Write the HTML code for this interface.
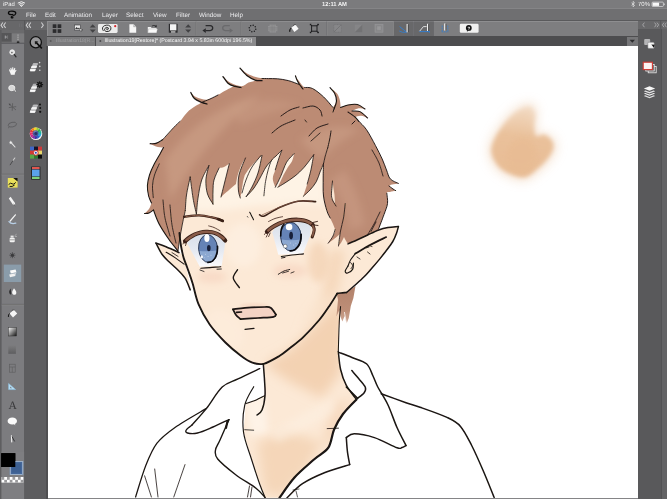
<!DOCTYPE html>
<html lang="en"><head><meta charset="utf-8"><title>CLIP STUDIO PAINT</title>
<style>
*{margin:0;padding:0;box-sizing:border-box}
html,body{width:667px;height:499px;overflow:hidden;background:#fff}
body{position:relative;text-rendering:geometricPrecision;font-family:"Liberation Sans",sans-serif;color:#e6e6e8}
.abs{position:absolute}
#status{left:0;top:0;width:667px;height:8px;background:#7b7b7d}
#status span{position:absolute;will-change:transform;top:0.9px;font-size:6.6px;line-height:8px;color:#f2f2f2;white-space:nowrap}
#menubar{left:0;top:8px;width:667px;height:12.5px;background:#6f6f71;border-top:1px solid #858587}
#menubar span{position:absolute;will-change:transform;top:2.9px;font-size:6.3px;line-height:8px;color:#ececee;white-space:nowrap}
#cmdbar{left:46.5px;top:20.5px;width:591.7px;height:15.7px;background:#7e7e80;border-top:0.8px solid #8e8e90;border-left:0.8px solid #8e8e90}
#tabbar{left:46.5px;top:36.3px;width:591.7px;height:10.1px;background:#4d4d4f}
.tab{position:absolute;will-change:transform;top:0.6px;height:9.4px;font-size:5.33px;line-height:9px;white-space:nowrap;overflow:hidden;letter-spacing:-0.02px}
#tab1{left:0.5px;width:48.3px;font-size:5.15px;background:#7a7a7c;color:#a0a0a2;padding-left:9px}
#tab2{left:49.5px;width:160.2px;background:#8a8a8c;color:#f6f6f6;padding-left:8.6px}
#tabdd{left:626.7px;top:36.6px;width:11.4px;height:9.4px;background:#767678}
#lhead{left:0;top:20.5px;width:46.5px;height:9.5px;background:#676769}
#ltools{left:0;top:30px;width:24.1px;height:469px;background:#7c7c7f}
#lsub{left:24.1px;top:30px;width:22.6px;height:469px;background:#5d5d5f}
#lborder{left:46.4px;top:46px;width:1.7px;height:453px;background:#4f4f51}
#rpanel{left:638.2px;top:20.5px;width:22.6px;height:478.5px;background:#59595b}
#rhead{left:638.2px;top:20.5px;width:28.8px;height:8.4px;background:#68686a}
#rfar{left:660.8px;top:28.9px;width:6.2px;height:470.1px;background:#636365;border-left:0.8px solid #525254}
#bottom{left:48px;top:497.8px;width:590.2px;height:1.2px;background:#858587}
svg{position:absolute;left:0;top:0}
</style></head>
<body>
<svg id="art" width="667" height="499" viewBox="0 0 667 499">
<rect x="48" y="46.3" width="590.2" height="452" fill="#fff"/>
<defs>
<filter id="b1" x="-20%" y="-20%" width="140%" height="140%"><feGaussianBlur stdDeviation="1"/></filter>
<filter id="b2" x="-30%" y="-30%" width="160%" height="160%"><feGaussianBlur stdDeviation="2.2"/></filter>
<filter id="b3" x="-30%" y="-30%" width="160%" height="160%"><feGaussianBlur stdDeviation="3.5"/></filter>
<filter id="b5" x="-40%" y="-40%" width="180%" height="180%"><feGaussianBlur stdDeviation="6"/></filter>
<filter id="soft" x="-5%" y="-5%" width="110%" height="110%"><feGaussianBlur stdDeviation="0.35"/></filter>

<clipPath id="skinclip"><path d="M188.0 172.0 C185.9 178.7 185.2 192.9 184.0 200.0 C182.8 207.1 179.7 220.1 179.0 225.0 C178.3 229.9 178.4 233.9 178.6 237.0 C178.8 240.1 180.0 245.3 180.6 248.0 C181.2 250.7 182.5 255.0 183.4 257.4 C184.3 259.8 186.3 264.2 187.0 266.0 C187.7 267.8 187.5 268.6 188.3 271.0 C189.1 273.4 191.4 279.6 192.8 284.0 C194.2 288.4 196.2 298.8 198.5 304.2 C200.8 309.6 206.1 319.4 209.7 324.5 C213.3 329.6 221.2 338.3 225.4 342.5 C229.6 346.7 237.6 353.3 241.2 356.0 C244.8 358.7 249.4 361.7 252.4 362.7 C255.4 363.7 260.1 364.7 263.7 363.8 C267.3 362.9 275.9 358.1 279.4 356.0 C282.9 353.9 286.8 350.6 290.0 348.0 C293.2 345.4 299.6 340.5 303.5 336.8 C307.4 333.1 315.6 324.3 319.2 320.0 C322.8 315.7 328.1 307.8 330.5 304.2 C332.9 300.6 335.3 294.8 337.2 293.0 C339.1 291.2 343.0 292.7 345.0 291.0 C347.0 289.3 350.8 286.3 352.0 280.0 C353.2 273.7 354.9 254.7 354.0 244.0 C353.1 233.3 347.5 211.2 345.0 200.0 C342.5 188.8 346.3 168.0 335.0 160.0 C323.7 152.0 278.0 141.3 260.0 140.0 C242.0 138.7 209.6 145.7 200.0 150.0 C190.4 154.3 190.1 165.3 188.0 172.0Z"/><path d="M263.3 360.0 L264.5 380.0 L265.0 395.7 L255.0 400.0 L245.9 403.5 L243.5 432.0 L251.4 459.0 L260.0 485.0 L265.2 497.7 L279.5 497.7 L294.5 477.5 L314.0 459.5 L328.3 447.7 L334.0 429.7 L343.0 414.0 L356.5 399.4 L346.2 385.2 L340.6 369.5 L338.3 351.5 L339.0 329.0 L340.6 306.5 L338.0 294.0 L300.0 330.0Z"/><path d="M156.0 243.1 L166.0 246.6 L178.0 251.6 L184.0 256.0 L191.0 290.0 L185.1 278.2 L176.1 268.2 L169.0 261.8 L162.0 254.2Z"/><path d="M340.0 250.0 L348.0 243.9 L358.0 239.5 L367.7 235.0 L378.7 229.5 L388.0 227.4 L398.6 226.8 L395.6 236.0 L389.0 246.0 L381.0 257.0 L373.2 266.4 L364.0 276.0 L355.2 284.0 L346.5 292.5 L337.0 294.0Z"/></clipPath>
</defs>
<path d="M530.6 103.7 C533.9 104.1 535.4 108.0 536.1 111.5 C536.9 114.9 534.9 120.6 535.0 124.7 C535.2 128.7 535.4 134.2 537.2 135.7 C539.1 137.2 543.3 133.2 546.1 133.9 C548.8 134.7 552.2 137.6 553.8 140.1 C555.4 142.6 556.3 145.6 555.5 148.9 C554.8 152.2 552.2 156.3 549.4 160.0 C546.5 163.6 542.4 167.7 538.3 171.0 C534.3 174.3 529.9 178.9 525.1 179.8 C520.3 180.7 514.5 178.5 509.7 176.5 C504.9 174.5 499.8 171.5 496.5 167.7 C493.1 163.8 490.1 157.9 489.4 153.3 C488.7 148.7 489.8 145.3 492.0 140.1 C494.3 135.0 499.0 127.6 503.1 122.5 C507.1 117.3 511.7 112.4 516.3 109.3 C520.9 106.1 527.3 103.4 530.6 103.7Z" fill="#ebc39e" opacity="0.55" filter="url(#b5)"/>
<defs><linearGradient id="smg" x1="0.55" y1="0" x2="0.45" y2="1"><stop offset="0" stop-color="#eccaa8" stop-opacity="0.35"/><stop offset="0.42" stop-color="#e9bf98" stop-opacity="0.95"/><stop offset="1" stop-color="#e8bc94" stop-opacity="1"/></linearGradient></defs>
<path d="M530.6 103.7 C533.9 104.1 535.4 108.0 536.1 111.5 C536.9 114.9 534.9 120.6 535.0 124.7 C535.2 128.7 535.4 134.2 537.2 135.7 C539.1 137.2 543.3 133.2 546.1 133.9 C548.8 134.7 552.2 137.6 553.8 140.1 C555.4 142.6 556.3 145.6 555.5 148.9 C554.8 152.2 552.2 156.3 549.4 160.0 C546.5 163.6 542.4 167.7 538.3 171.0 C534.3 174.3 529.9 178.9 525.1 179.8 C520.3 180.7 514.5 178.5 509.7 176.5 C504.9 174.5 499.8 171.5 496.5 167.7 C493.1 163.8 490.1 157.9 489.4 153.3 C488.7 148.7 489.8 145.3 492.0 140.1 C494.3 135.0 499.0 127.6 503.1 122.5 C507.1 117.3 511.7 112.4 516.3 109.3 C520.9 106.1 527.3 103.4 530.6 103.7Z" fill="url(#smg)" filter="url(#b2)" transform="translate(521 142) scale(0.93) translate(-521 -142)"/>
<ellipse cx="521.5" cy="155" rx="15" ry="17" fill="#e8bb93" opacity="0.6" filter="url(#b2)" transform="rotate(20 521.5 155)"/>
<g>
<path d="M188.0 172.0 C185.9 178.7 185.2 192.9 184.0 200.0 C182.8 207.1 179.7 220.1 179.0 225.0 C178.3 229.9 178.4 233.9 178.6 237.0 C178.8 240.1 180.0 245.3 180.6 248.0 C181.2 250.7 182.5 255.0 183.4 257.4 C184.3 259.8 186.3 264.2 187.0 266.0 C187.7 267.8 187.5 268.6 188.3 271.0 C189.1 273.4 191.4 279.6 192.8 284.0 C194.2 288.4 196.2 298.8 198.5 304.2 C200.8 309.6 206.1 319.4 209.7 324.5 C213.3 329.6 221.2 338.3 225.4 342.5 C229.6 346.7 237.6 353.3 241.2 356.0 C244.8 358.7 249.4 361.7 252.4 362.7 C255.4 363.7 260.1 364.7 263.7 363.8 C267.3 362.9 275.9 358.1 279.4 356.0 C282.9 353.9 286.8 350.6 290.0 348.0 C293.2 345.4 299.6 340.5 303.5 336.8 C307.4 333.1 315.6 324.3 319.2 320.0 C322.8 315.7 328.1 307.8 330.5 304.2 C332.9 300.6 335.3 294.8 337.2 293.0 C339.1 291.2 343.0 292.7 345.0 291.0 C347.0 289.3 350.8 286.3 352.0 280.0 C353.2 273.7 354.9 254.7 354.0 244.0 C353.1 233.3 347.5 211.2 345.0 200.0 C342.5 188.8 346.3 168.0 335.0 160.0 C323.7 152.0 278.0 141.3 260.0 140.0 C242.0 138.7 209.6 145.7 200.0 150.0 C190.4 154.3 190.1 165.3 188.0 172.0Z" fill="#fce9d6"/>
<path d="M263.3 360.0 L264.5 380.0 L265.0 395.7 L255.0 400.0 L245.9 403.5 L243.5 432.0 L251.4 459.0 L260.0 485.0 L265.2 497.7 L279.5 497.7 L294.5 477.5 L314.0 459.5 L328.3 447.7 L334.0 429.7 L343.0 414.0 L356.5 399.4 L346.2 385.2 L340.6 369.5 L338.3 351.5 L339.0 329.0 L340.6 306.5 L338.0 294.0 L300.0 330.0Z" fill="#fce9d6"/>
<path d="M156.0 243.1 L166.0 246.6 L178.0 251.6 L184.0 256.0 L191.0 290.0 L185.1 278.2 L176.1 268.2 L169.0 261.8 L162.0 254.2Z" fill="#fce9d6"/>
<path d="M340.0 250.0 L348.0 243.9 L358.0 239.5 L367.7 235.0 L378.7 229.5 L388.0 227.4 L398.6 226.8 L395.6 236.0 L389.0 246.0 L381.0 257.0 L373.2 266.4 L364.0 276.0 L355.2 284.0 L346.5 292.5 L337.0 294.0Z" fill="#fce9d6"/>
</g>
<g clip-path="url(#skinclip)">
<g filter="url(#b5)" fill="#f0c9a5">
<path d="M264 364 L290 350 L322 318 L342 296 L344 336 L340 374 L322 398 L288 381 Z" opacity="0.72"/>
<path d="M300 330 L338 290 L345 250 L330 250 L322 300 Z" opacity="0.6"/>
<path d="M257 442 L288 432 L322 442 L305 472 L281 497 L264 493 Z" opacity="0.6"/>
<path d="M332 408 L352 396 L334 442 L322 446 Z" opacity="0.55"/>
</g>
<g filter="url(#b3)"><path d="M270 432 L332 398 L336 412 L278 443 Z" fill="#fdf1e4" opacity="0.45"/><path d="M245 397 L264 394 L268 432 L250 436 Z" fill="#fef5ea" opacity="0.85"/></g>
<g filter="url(#b3)"><path d="M188 160 L325 150 L325 205 L300 203 L260 205 L225 210 L188 212 Z" fill="#fef4e8" opacity="0.85"/><ellipse cx="243" cy="245" rx="18" ry="22" fill="#fef2e4" opacity="0.6"/><ellipse cx="225" cy="330" rx="16" ry="22" fill="#fef2e4" opacity="0.3" transform="rotate(-35 225 330)"/>
</g>
<g filter="url(#b3)">
<ellipse cx="212" cy="277" rx="15" ry="6" fill="#f3c6ae" opacity="0.4"/>
<ellipse cx="290" cy="271" rx="17" ry="7" fill="#f3c6ae" opacity="0.4"/>
<ellipse cx="318" cy="262" rx="10" ry="20" fill="#f1cba8" opacity="0.55"/>
</g>
</g>
<defs><linearGradient id="ew" x1="0" y1="0" x2="0" y2="1"><stop offset="0" stop-color="#d6dde8"/><stop offset="0.55" stop-color="#e6eaf2"/><stop offset="1" stop-color="#fafafc"/></linearGradient></defs>
<path d="M187 243 L194 236 L206 232 L217 233 L225.6 241 L221.7 265.8 L199.8 266.8 Z" fill="url(#ew)"/>
<path d="M272.3 232.2 L278 223 L290 219.5 L302 220 L311 226 L310 236 L303 253.5 L278.3 254.8 Z" fill="url(#ew)"/>
<clipPath id="eyeL"><path d="M187 243 L194 235 L206 231.5 L217 233 L225 241 L221.3 266 L200.3 267 Z"/></clipPath>
<clipPath id="eyeR"><path d="M272.3 232.2 L278 223 L290 219.5 L302 220 L311 226 L310 236 L303 254 L278.3 255 Z"/></clipPath>
<clipPath id="irL"><ellipse cx="208.1" cy="248.6" rx="9.5" ry="13.9"/></clipPath>
<clipPath id="irR"><ellipse cx="290.9" cy="236.6" rx="10.3" ry="14.4"/></clipPath>
<g clip-path="url(#eyeL)"><g transform="rotate(-4 208.1 248.6)">
<g clip-path="url(#irL)"><rect x="196" y="232" width="25" height="32" fill="#8ca8d1"/>
<path d="M196 230 H221 V250.5 Q208 252.5 196 249.5 Z" fill="#6583b6"/>
<g fill="#d8e4f4" opacity="0.8"><circle cx="205" cy="254" r="0.5"/><circle cx="207.5" cy="256.5" r="0.5"/><circle cx="210.5" cy="255.5" r="0.5"/><circle cx="204" cy="257.5" r="0.4"/></g></g>
<ellipse cx="208.1" cy="248.6" rx="9.5" ry="13.9" fill="none" stroke="#27344e" stroke-width="0.9"/>
<path d="M217.6 247 Q217.4 257 211.6 261.4 Q209.6 262.6 207 262.4" fill="none" stroke="#0b0b10" stroke-width="1.7" stroke-linecap="round"/>
</g></g>
<g clip-path="url(#eyeR)"><g transform="rotate(-3 291.4 236.6)">
<g clip-path="url(#irR)"><rect x="279" y="220" width="26" height="33" fill="#8ca8d1"/>
<path d="M279 218 H305 V239.5 Q291 241.5 279 238.5 Z" fill="#6583b6"/>
<g fill="#d8e4f4" opacity="0.8"><circle cx="290" cy="243" r="0.5"/><circle cx="293" cy="245" r="0.5"/><circle cx="295.5" cy="243.5" r="0.5"/></g></g>
<ellipse cx="290.9" cy="236.6" rx="10.3" ry="14.4" fill="none" stroke="#27344e" stroke-width="0.9"/>
<path d="M301.2 235 Q301.1 245 294.5 249.6 Q292.5 250.8 289.5 250.8" fill="none" stroke="#0b0b10" stroke-width="1.8" stroke-linecap="round"/>
<path d="M280.7 236 Q280.7 227 285.1 223.4" fill="none" stroke="#0b0b10" stroke-width="1.5"/>
</g></g>
<ellipse cx="208.8" cy="248.1" rx="1.8" ry="3.2" fill="#18203a"/>
<ellipse cx="291.1" cy="235.6" rx="1.9" ry="3.8" fill="#18203a"/>
<ellipse cx="206.9" cy="238" rx="2.6" ry="3.9" fill="#fff"/>
<ellipse cx="289.1" cy="227" rx="3.3" ry="3.3" fill="#fff"/>
<circle cx="285.2" cy="246.2" r="1.9" fill="#fff" stroke="#222" stroke-width="0.4"/>
<ellipse cx="201.8" cy="256.9" rx="1.2" ry="1.6" fill="#f4f6fa"/>
<path d="M178.0 251.0 C176.5 249.1 172.2 244.1 169.0 239.5 C165.8 234.9 161.6 228.6 159.0 223.7 C156.4 218.8 154.4 212.3 153.5 210.0 L153.5 210.0 C152.8 210.5 150.5 212.4 149.0 213.0 C147.5 213.6 145.2 213.5 144.5 213.6 L144.5 213.6 C145.2 212.8 147.8 210.8 149.0 209.0 C150.2 207.2 151.1 204.0 151.5 203.0 L151.5 203.0 C151.0 201.8 149.3 198.9 148.6 196.0 C147.9 193.1 147.2 189.1 147.4 185.6 C147.6 182.1 148.4 178.5 149.5 175.0 C150.6 171.5 152.2 168.1 154.0 164.6 C155.8 161.1 158.4 156.8 160.0 154.0 C161.6 151.2 162.9 148.6 163.5 147.5 L163.5 147.5 C162.2 147.3 158.2 147.0 156.0 146.4 C153.8 145.8 151.1 144.1 150.1 143.7 L150.1 143.7 C151.1 143.6 153.9 143.7 156.0 143.0 C158.1 142.3 159.6 142.4 162.5 139.8 C165.4 137.2 170.8 130.6 173.7 127.5 C176.6 124.4 177.4 124.2 180.0 121.4 C182.6 118.6 185.4 113.7 189.0 110.5 C192.6 107.3 199.6 103.8 201.7 102.4 L201.7 102.4 C200.5 101.8 196.2 100.2 194.4 98.5 C192.6 96.8 191.4 93.5 190.8 92.5 L190.8 92.5 C191.7 93.2 193.3 95.8 196.0 97.0 C198.7 98.2 203.7 99.9 207.0 99.7 C210.3 99.5 213.0 97.5 216.0 96.0 C219.0 94.5 222.0 92.3 225.0 90.7 C228.0 89.1 232.5 87.0 234.0 86.2 L234.0 86.2 C233.0 85.7 229.8 84.8 228.0 83.2 C226.2 81.6 223.8 77.7 223.0 76.6 L223.0 76.6 C224.2 77.6 226.9 80.9 230.0 82.5 C233.1 84.1 238.3 86.2 241.4 86.2 C244.5 86.2 246.2 83.5 248.6 82.6 C251.0 81.7 254.6 81.1 255.8 80.8 L255.8 80.8 C254.3 79.9 249.4 77.5 246.8 75.4 C244.2 73.3 241.1 69.3 240.0 68.1 L240.0 68.1 C241.2 69.0 244.6 72.2 247.5 73.8 C250.4 75.4 254.1 76.7 257.6 77.5 C261.1 78.3 265.1 78.4 268.4 78.6 C271.7 78.8 274.2 78.5 277.5 78.8 C280.8 79.1 284.7 79.7 288.3 80.6 C291.9 81.5 297.2 83.8 299.0 84.4 L299.0 84.4 C298.7 83.7 297.6 81.4 297.0 80.0 C296.4 78.6 295.8 76.6 295.5 75.9 L295.5 75.9 C296.1 76.8 297.5 79.1 299.0 81.0 C300.5 82.9 302.4 86.2 304.6 87.5 C306.9 88.8 309.3 86.9 312.5 88.5 C315.7 90.1 320.3 93.8 323.7 97.0 C327.1 100.2 331.4 105.8 333.0 107.5 L333.0 107.5 C333.6 106.4 336.2 103.4 336.5 101.0 C336.8 98.6 335.6 95.2 334.5 93.0 C333.4 90.8 330.8 88.6 330.0 87.7 L330.0 87.7 C331.2 88.7 335.4 91.5 337.0 93.5 C338.6 95.5 339.2 97.7 339.8 100.0 C340.4 102.3 340.5 106.2 340.6 107.5 L340.6 107.5 C341.8 107.1 345.2 105.5 348.0 105.0 C350.8 104.5 354.7 103.9 357.5 104.6 C360.3 105.3 363.8 108.3 365.0 109.0 L365.0 109.0 C363.8 108.9 360.2 108.1 358.0 108.4 C355.8 108.7 353.0 110.6 352.0 111.0 L352.0 111.0 C353.3 111.1 357.4 110.4 360.0 111.6 C362.6 112.8 366.3 116.9 367.6 118.0 L367.6 118.0 C366.5 117.6 363.1 116.0 361.0 115.8 C358.9 115.6 356.0 116.8 355.0 117.0 L355.0 117.0 C355.7 117.8 357.1 119.4 359.0 121.5 C360.9 123.6 363.8 125.7 366.5 129.7 C369.2 133.7 372.8 140.5 375.4 145.4 C378.0 150.3 380.3 154.9 382.2 159.0 C384.1 163.1 385.1 166.7 386.5 170.0 C387.9 173.3 388.3 176.7 390.3 178.9 C392.3 181.1 397.0 182.7 398.4 183.4 L398.4 183.4 C397.3 183.6 393.6 184.1 392.0 184.5 C390.4 184.9 389.5 185.8 389.0 186.0 L389.0 186.0 C389.7 186.5 391.9 188.2 393.0 189.0 C394.1 189.8 395.2 190.3 395.7 190.6 L395.7 190.6 C394.8 190.8 391.5 191.6 390.0 192.0 C388.5 192.4 387.2 191.4 386.8 193.3 C386.4 195.2 388.0 200.1 387.5 203.6 C387.0 207.1 385.5 210.2 384.0 214.5 C382.5 218.8 379.6 227.0 378.7 229.5 L378.7 229.5 C376.9 230.4 371.1 233.3 367.7 235.0 C364.2 236.7 361.3 238.0 358.0 239.5 C354.7 241.0 349.7 243.2 348.0 243.9 L348.0 243.9 C347.6 243.2 346.2 241.2 345.5 240.0 C344.8 238.8 344.2 237.5 344.0 237.0 L344.0 237.0 C343.6 237.8 342.4 240.5 341.5 242.0 C340.6 243.5 339.0 245.3 338.5 246.0 L338.5 246.0 C338.7 245.0 339.2 242.0 339.5 240.0 C339.8 238.0 339.9 235.0 340.0 234.0 L340.0 234.0 C339.0 234.8 336.0 237.5 334.0 239.0 C332.0 240.5 329.2 242.5 328.2 243.2 L328.2 243.2 C329.0 242.0 331.9 238.3 333.0 236.0 C334.1 233.7 335.5 232.6 335.0 229.6 C334.5 226.6 331.6 221.2 330.2 218.0 C328.8 214.8 327.9 214.2 326.8 210.5 C325.7 206.8 324.1 201.4 323.5 196.0 C322.9 190.6 323.2 183.4 323.2 178.0 C323.2 172.6 323.4 166.0 323.5 163.6 L323.5 163.6 C322.9 165.0 321.2 169.0 320.0 172.0 C318.8 175.0 318.0 178.7 316.3 181.7 C314.6 184.7 312.2 187.6 310.0 190.0 C307.8 192.4 304.3 195.3 303.2 196.4 L303.2 196.4 C303.9 194.3 305.9 188.4 307.2 184.0 C308.5 179.6 309.8 174.9 310.9 170.0 C312.0 165.1 313.2 157.3 313.7 154.8 L313.7 154.8 C312.1 156.9 307.3 163.7 304.2 167.2 C301.1 170.7 298.2 173.4 295.0 176.0 C291.8 178.6 287.9 181.0 285.0 182.9 C282.1 184.8 279.0 186.5 277.8 187.2 L277.8 187.2 C278.6 185.6 280.7 180.7 282.3 177.4 C283.9 174.1 286.1 170.3 287.7 167.6 C289.3 164.9 290.9 163.5 292.0 161.2 C293.1 158.9 293.8 154.9 294.2 153.6 L294.2 153.6 C292.9 155.0 288.9 158.4 286.6 162.2 C284.4 166.0 282.6 172.1 280.7 176.3 C278.8 180.5 276.2 185.5 275.3 187.3 L275.3 187.3 C274.9 185.8 272.8 181.4 272.8 178.5 C272.8 175.6 274.3 173.2 275.3 169.8 C276.3 166.4 277.9 161.2 279.0 157.9 C280.1 154.7 281.3 151.6 281.8 150.3 L281.8 150.3 C280.8 151.2 277.7 154.3 276.0 156.0 C274.3 157.7 272.2 159.8 271.5 160.5 L271.5 160.5 C270.6 161.6 267.9 164.1 266.0 167.0 C264.1 169.9 262.0 174.5 260.0 178.0 C258.0 181.5 256.3 184.9 254.0 188.0 C251.7 191.1 247.5 195.2 246.2 196.6 L246.2 196.6 C247.2 195.0 250.0 190.9 252.0 187.0 C254.0 183.1 256.3 178.2 258.0 173.0 C259.7 167.8 261.3 158.4 262.0 155.5 L262.0 155.5 C261.0 156.4 258.0 159.0 256.0 161.0 C254.0 163.0 251.9 165.2 250.0 167.5 C248.1 169.8 245.7 173.8 244.8 175.0 L244.8 175.0 C244.5 176.2 243.5 179.5 243.0 182.0 C242.5 184.5 242.2 187.3 241.8 190.0 C241.4 192.7 240.6 196.7 240.3 198.0 L240.3 198.0 C240.0 196.7 238.6 193.8 238.4 190.0 C238.2 186.2 237.8 180.3 239.0 175.0 C240.2 169.7 244.4 160.8 245.5 158.0 L245.5 158.0 C244.8 159.3 242.3 163.0 241.0 166.0 C239.7 169.0 238.3 173.0 237.5 176.0 C236.7 179.0 236.2 182.7 236.0 184.0 L236.0 184.0 C234.8 185.0 231.5 187.8 229.0 190.0 C226.5 192.2 222.3 195.8 221.0 197.0 L221.0 197.0 C221.5 195.0 223.1 188.7 224.0 185.0 C224.9 181.3 225.6 178.5 226.5 175.0 C227.4 171.5 228.8 165.7 229.3 163.8 L229.3 163.8 C228.4 164.3 225.7 166.3 224.0 167.0 C222.3 167.7 219.9 167.8 219.1 168.0 L219.1 168.0 C218.2 170.0 215.0 176.2 214.0 180.0 C213.0 183.8 213.2 187.0 213.0 191.0 C212.8 195.0 213.0 201.9 213.0 204.1 L213.0 204.1 C212.1 202.4 208.7 198.0 207.5 194.0 C206.3 190.0 205.7 184.7 205.9 180.0 C206.1 175.3 208.4 168.0 208.9 165.6 L208.9 165.6 C207.7 168.0 203.5 174.6 201.7 180.0 C199.9 185.4 198.9 192.3 198.0 198.0 C197.1 203.7 196.7 211.3 196.4 214.0 L196.4 214.0 C195.8 211.3 194.0 204.2 193.0 198.0 C192.0 191.8 190.7 180.5 190.2 177.0 L190.2 177.0 C189.6 180.0 187.3 189.4 186.5 195.0 C185.7 200.6 185.5 207.8 185.3 210.4 L185.3 210.4 C184.8 213.0 182.9 221.2 182.0 226.0 C181.1 230.8 180.3 235.3 179.6 239.5 C178.9 243.7 178.3 249.1 178.0 251.0Z" fill="#bc8b74"/>
<path d="M332.5 181.5 Q330.6 190 331.2 198 L335 203.5 Q334.8 194 333.4 187 Z" fill="#fce9d6"/>
<clipPath id="hairclip"><path d="M178.0 251.0 C176.5 249.1 172.2 244.1 169.0 239.5 C165.8 234.9 161.6 228.6 159.0 223.7 C156.4 218.8 154.4 212.3 153.5 210.0 L153.5 210.0 C152.8 210.5 150.5 212.4 149.0 213.0 C147.5 213.6 145.2 213.5 144.5 213.6 L144.5 213.6 C145.2 212.8 147.8 210.8 149.0 209.0 C150.2 207.2 151.1 204.0 151.5 203.0 L151.5 203.0 C151.0 201.8 149.3 198.9 148.6 196.0 C147.9 193.1 147.2 189.1 147.4 185.6 C147.6 182.1 148.4 178.5 149.5 175.0 C150.6 171.5 152.2 168.1 154.0 164.6 C155.8 161.1 158.4 156.8 160.0 154.0 C161.6 151.2 162.9 148.6 163.5 147.5 L163.5 147.5 C162.2 147.3 158.2 147.0 156.0 146.4 C153.8 145.8 151.1 144.1 150.1 143.7 L150.1 143.7 C151.1 143.6 153.9 143.7 156.0 143.0 C158.1 142.3 159.6 142.4 162.5 139.8 C165.4 137.2 170.8 130.6 173.7 127.5 C176.6 124.4 177.4 124.2 180.0 121.4 C182.6 118.6 185.4 113.7 189.0 110.5 C192.6 107.3 199.6 103.8 201.7 102.4 L201.7 102.4 C200.5 101.8 196.2 100.2 194.4 98.5 C192.6 96.8 191.4 93.5 190.8 92.5 L190.8 92.5 C191.7 93.2 193.3 95.8 196.0 97.0 C198.7 98.2 203.7 99.9 207.0 99.7 C210.3 99.5 213.0 97.5 216.0 96.0 C219.0 94.5 222.0 92.3 225.0 90.7 C228.0 89.1 232.5 87.0 234.0 86.2 L234.0 86.2 C233.0 85.7 229.8 84.8 228.0 83.2 C226.2 81.6 223.8 77.7 223.0 76.6 L223.0 76.6 C224.2 77.6 226.9 80.9 230.0 82.5 C233.1 84.1 238.3 86.2 241.4 86.2 C244.5 86.2 246.2 83.5 248.6 82.6 C251.0 81.7 254.6 81.1 255.8 80.8 L255.8 80.8 C254.3 79.9 249.4 77.5 246.8 75.4 C244.2 73.3 241.1 69.3 240.0 68.1 L240.0 68.1 C241.2 69.0 244.6 72.2 247.5 73.8 C250.4 75.4 254.1 76.7 257.6 77.5 C261.1 78.3 265.1 78.4 268.4 78.6 C271.7 78.8 274.2 78.5 277.5 78.8 C280.8 79.1 284.7 79.7 288.3 80.6 C291.9 81.5 297.2 83.8 299.0 84.4 L299.0 84.4 C298.7 83.7 297.6 81.4 297.0 80.0 C296.4 78.6 295.8 76.6 295.5 75.9 L295.5 75.9 C296.1 76.8 297.5 79.1 299.0 81.0 C300.5 82.9 302.4 86.2 304.6 87.5 C306.9 88.8 309.3 86.9 312.5 88.5 C315.7 90.1 320.3 93.8 323.7 97.0 C327.1 100.2 331.4 105.8 333.0 107.5 L333.0 107.5 C333.6 106.4 336.2 103.4 336.5 101.0 C336.8 98.6 335.6 95.2 334.5 93.0 C333.4 90.8 330.8 88.6 330.0 87.7 L330.0 87.7 C331.2 88.7 335.4 91.5 337.0 93.5 C338.6 95.5 339.2 97.7 339.8 100.0 C340.4 102.3 340.5 106.2 340.6 107.5 L340.6 107.5 C341.8 107.1 345.2 105.5 348.0 105.0 C350.8 104.5 354.7 103.9 357.5 104.6 C360.3 105.3 363.8 108.3 365.0 109.0 L365.0 109.0 C363.8 108.9 360.2 108.1 358.0 108.4 C355.8 108.7 353.0 110.6 352.0 111.0 L352.0 111.0 C353.3 111.1 357.4 110.4 360.0 111.6 C362.6 112.8 366.3 116.9 367.6 118.0 L367.6 118.0 C366.5 117.6 363.1 116.0 361.0 115.8 C358.9 115.6 356.0 116.8 355.0 117.0 L355.0 117.0 C355.7 117.8 357.1 119.4 359.0 121.5 C360.9 123.6 363.8 125.7 366.5 129.7 C369.2 133.7 372.8 140.5 375.4 145.4 C378.0 150.3 380.3 154.9 382.2 159.0 C384.1 163.1 385.1 166.7 386.5 170.0 C387.9 173.3 388.3 176.7 390.3 178.9 C392.3 181.1 397.0 182.7 398.4 183.4 L398.4 183.4 C397.3 183.6 393.6 184.1 392.0 184.5 C390.4 184.9 389.5 185.8 389.0 186.0 L389.0 186.0 C389.7 186.5 391.9 188.2 393.0 189.0 C394.1 189.8 395.2 190.3 395.7 190.6 L395.7 190.6 C394.8 190.8 391.5 191.6 390.0 192.0 C388.5 192.4 387.2 191.4 386.8 193.3 C386.4 195.2 388.0 200.1 387.5 203.6 C387.0 207.1 385.5 210.2 384.0 214.5 C382.5 218.8 379.6 227.0 378.7 229.5 L378.7 229.5 C376.9 230.4 371.1 233.3 367.7 235.0 C364.2 236.7 361.3 238.0 358.0 239.5 C354.7 241.0 349.7 243.2 348.0 243.9 L348.0 243.9 C347.6 243.2 346.2 241.2 345.5 240.0 C344.8 238.8 344.2 237.5 344.0 237.0 L344.0 237.0 C343.6 237.8 342.4 240.5 341.5 242.0 C340.6 243.5 339.0 245.3 338.5 246.0 L338.5 246.0 C338.7 245.0 339.2 242.0 339.5 240.0 C339.8 238.0 339.9 235.0 340.0 234.0 L340.0 234.0 C339.0 234.8 336.0 237.5 334.0 239.0 C332.0 240.5 329.2 242.5 328.2 243.2 L328.2 243.2 C329.0 242.0 331.9 238.3 333.0 236.0 C334.1 233.7 335.5 232.6 335.0 229.6 C334.5 226.6 331.6 221.2 330.2 218.0 C328.8 214.8 327.9 214.2 326.8 210.5 C325.7 206.8 324.1 201.4 323.5 196.0 C322.9 190.6 323.2 183.4 323.2 178.0 C323.2 172.6 323.4 166.0 323.5 163.6 L323.5 163.6 C322.9 165.0 321.2 169.0 320.0 172.0 C318.8 175.0 318.0 178.7 316.3 181.7 C314.6 184.7 312.2 187.6 310.0 190.0 C307.8 192.4 304.3 195.3 303.2 196.4 L303.2 196.4 C303.9 194.3 305.9 188.4 307.2 184.0 C308.5 179.6 309.8 174.9 310.9 170.0 C312.0 165.1 313.2 157.3 313.7 154.8 L313.7 154.8 C312.1 156.9 307.3 163.7 304.2 167.2 C301.1 170.7 298.2 173.4 295.0 176.0 C291.8 178.6 287.9 181.0 285.0 182.9 C282.1 184.8 279.0 186.5 277.8 187.2 L277.8 187.2 C278.6 185.6 280.7 180.7 282.3 177.4 C283.9 174.1 286.1 170.3 287.7 167.6 C289.3 164.9 290.9 163.5 292.0 161.2 C293.1 158.9 293.8 154.9 294.2 153.6 L294.2 153.6 C292.9 155.0 288.9 158.4 286.6 162.2 C284.4 166.0 282.6 172.1 280.7 176.3 C278.8 180.5 276.2 185.5 275.3 187.3 L275.3 187.3 C274.9 185.8 272.8 181.4 272.8 178.5 C272.8 175.6 274.3 173.2 275.3 169.8 C276.3 166.4 277.9 161.2 279.0 157.9 C280.1 154.7 281.3 151.6 281.8 150.3 L281.8 150.3 C280.8 151.2 277.7 154.3 276.0 156.0 C274.3 157.7 272.2 159.8 271.5 160.5 L271.5 160.5 C270.6 161.6 267.9 164.1 266.0 167.0 C264.1 169.9 262.0 174.5 260.0 178.0 C258.0 181.5 256.3 184.9 254.0 188.0 C251.7 191.1 247.5 195.2 246.2 196.6 L246.2 196.6 C247.2 195.0 250.0 190.9 252.0 187.0 C254.0 183.1 256.3 178.2 258.0 173.0 C259.7 167.8 261.3 158.4 262.0 155.5 L262.0 155.5 C261.0 156.4 258.0 159.0 256.0 161.0 C254.0 163.0 251.9 165.2 250.0 167.5 C248.1 169.8 245.7 173.8 244.8 175.0 L244.8 175.0 C244.5 176.2 243.5 179.5 243.0 182.0 C242.5 184.5 242.2 187.3 241.8 190.0 C241.4 192.7 240.6 196.7 240.3 198.0 L240.3 198.0 C240.0 196.7 238.6 193.8 238.4 190.0 C238.2 186.2 237.8 180.3 239.0 175.0 C240.2 169.7 244.4 160.8 245.5 158.0 L245.5 158.0 C244.8 159.3 242.3 163.0 241.0 166.0 C239.7 169.0 238.3 173.0 237.5 176.0 C236.7 179.0 236.2 182.7 236.0 184.0 L236.0 184.0 C234.8 185.0 231.5 187.8 229.0 190.0 C226.5 192.2 222.3 195.8 221.0 197.0 L221.0 197.0 C221.5 195.0 223.1 188.7 224.0 185.0 C224.9 181.3 225.6 178.5 226.5 175.0 C227.4 171.5 228.8 165.7 229.3 163.8 L229.3 163.8 C228.4 164.3 225.7 166.3 224.0 167.0 C222.3 167.7 219.9 167.8 219.1 168.0 L219.1 168.0 C218.2 170.0 215.0 176.2 214.0 180.0 C213.0 183.8 213.2 187.0 213.0 191.0 C212.8 195.0 213.0 201.9 213.0 204.1 L213.0 204.1 C212.1 202.4 208.7 198.0 207.5 194.0 C206.3 190.0 205.7 184.7 205.9 180.0 C206.1 175.3 208.4 168.0 208.9 165.6 L208.9 165.6 C207.7 168.0 203.5 174.6 201.7 180.0 C199.9 185.4 198.9 192.3 198.0 198.0 C197.1 203.7 196.7 211.3 196.4 214.0 L196.4 214.0 C195.8 211.3 194.0 204.2 193.0 198.0 C192.0 191.8 190.7 180.5 190.2 177.0 L190.2 177.0 C189.6 180.0 187.3 189.4 186.5 195.0 C185.7 200.6 185.5 207.8 185.3 210.4 L185.3 210.4 C184.8 213.0 182.9 221.2 182.0 226.0 C181.1 230.8 180.3 235.3 179.6 239.5 C178.9 243.7 178.3 249.1 178.0 251.0Z"/></clipPath>
<g clip-path="url(#hairclip)"><g filter="url(#b3)" fill="#c99b83">
<path d="M165 160 Q200 110 260 95 Q230 120 205 150 Q185 175 170 200 Z" opacity="0.8"/>
<path d="M300 140 Q330 120 360 130 Q340 140 320 160 Z" opacity="0.7"/>
<path d="M330 180 Q345 200 350 230 L365 225 Q360 195 345 170 Z" opacity="0.6"/>
<path d="M230 105 Q270 95 300 105 Q270 112 240 125 Z" opacity="0.5"/>
</g></g>
<defs><linearGradient id="hu" x1="0" y1="0" x2="0" y2="1"><stop offset="0" stop-color="#b3826b"/><stop offset="0.65" stop-color="#bd8e77"/><stop offset="1" stop-color="#d2ac99"/></linearGradient></defs>
<path d="M336.8 293.4 L346.5 292.5 L355.5 286 L353.4 298 L350.8 306 L348.8 318 L346.6 323.5 L344.6 316 L342.4 321.5 L340.6 317 L339.4 310 L336.4 316.5 L338 300 Z" fill="url(#hu)"/>
<path d="M344.4 312 L346.6 324" stroke="#fff" stroke-width="0.9" opacity="0.8"/>
<path d="M233 309.3 L245 307.8 L264.6 307 L271 308 L275.9 314.6 L273.6 316.8 L258 318 L240.5 319.1 L236 315 Z" fill="#f4d3c4"/>
<ellipse cx="254" cy="305.5" rx="14" ry="2.5" fill="#f4d0bc" opacity="0.5" filter="url(#b1)"/>
<g fill="none" stroke="#1a1412" stroke-linecap="round" stroke-linejoin="round" filter="url(#soft)">
<path d="M179.4 233.0 C179.6 234.5 180.0 239.2 180.4 242.0 C180.8 244.8 181.2 247.3 181.8 250.0 C182.4 252.7 182.9 255.6 183.8 258.4 C184.7 261.2 186.2 264.7 187.0 267.0 C187.8 269.3 187.8 269.2 188.8 272.0 C189.8 274.8 191.2 278.6 192.8 284.0 C194.4 289.4 195.7 297.4 198.5 304.2 C201.3 310.9 205.2 318.1 209.7 324.5 C214.2 330.9 220.2 337.2 225.4 342.5 C230.7 347.8 236.7 352.6 241.2 356.0 C245.7 359.4 248.7 361.4 252.4 362.7 C256.1 364.0 259.2 364.9 263.7 363.8 C268.2 362.7 275.0 358.6 279.4 356.0 C283.8 353.4 286.0 351.2 290.0 348.0 C294.0 344.8 298.6 341.5 303.5 336.8 C308.4 332.1 314.7 325.4 319.2 320.0 C323.7 314.6 327.5 308.6 330.5 304.2 C333.5 299.8 336.1 295.3 337.2 293.5" stroke-width="1.84"/>
<path d="M337.2 293.5 C337.8 293.4 339.4 293.2 341.0 293.0 C342.6 292.8 345.6 292.6 346.5 292.5" stroke-width="1.61"/>
<path d="M348.0 243.9 C349.7 243.2 354.7 241.0 358.0 239.5 C361.3 238.0 364.2 236.6 367.7 235.0 C371.1 233.4 375.3 231.2 378.7 230.0 C382.1 228.8 384.7 228.2 388.0 227.6 C391.3 227.0 396.7 226.8 398.4 226.6" stroke-width="1.49"/>
<path d="M398.4 226.6 C398.1 227.7 397.5 230.5 396.6 233.0 C395.7 235.5 394.6 238.5 392.8 241.5 C391.0 244.5 388.2 248.1 386.0 251.0 C383.8 253.9 381.9 256.3 379.6 259.1 C377.3 261.9 374.6 265.1 372.0 268.0 C369.4 270.9 366.9 274.0 364.1 276.8 C361.3 279.6 358.1 282.4 355.2 285.0 C352.3 287.6 347.9 291.2 346.5 292.5" stroke-width="1.49"/>
<path d="M355.3 253.6 C357.8 252.2 364.9 247.8 370.0 245.0 C375.1 242.2 383.5 238.4 386.2 237.1" stroke-width="1.72"/>
<path d="M355.3 253.6 C354.5 254.7 351.7 257.9 350.5 260.0 C349.3 262.1 348.4 265.0 348.0 266.0" stroke-width="1.03"/>
<path d="M348.0 266.0 C347.5 266.9 345.3 270.0 345.2 271.2 C345.1 272.4 346.4 273.3 347.6 273.0 C348.8 272.7 351.6 271.1 352.6 269.4 C353.6 267.7 353.3 264.1 353.4 263.0" stroke-width="1.15"/>
<path d="M350.6 262.6 C350.9 263.1 352.5 264.6 352.6 265.6 C352.7 266.6 351.3 268.1 351.0 268.6" stroke-width="0.92"/>
<path d="M366.0 248.0 L369.0 247.0" stroke-width="0.80"/>
<path d="M367.5 252.0 L370.0 254.0" stroke-width="0.80"/>
<path d="M369.0 245.5 L372.0 246.5" stroke-width="0.80"/>
<path d="M357.0 257.0 L360.0 259.0" stroke-width="0.80"/>
<path d="M179.0 252.6 C176.8 251.6 169.8 248.4 166.0 246.8 C162.2 245.2 157.7 243.7 156.0 243.1" stroke-width="1.49"/>
<path d="M156.0 243.1 C157.0 244.9 159.8 251.1 162.0 254.2 C164.2 257.3 166.7 259.5 169.0 261.8 C171.3 264.1 173.4 265.5 176.1 268.2 C178.8 270.9 182.8 274.6 185.1 278.2 C187.4 281.8 189.3 287.9 190.2 289.9" stroke-width="1.49"/>
<path d="M166.1 252.2 C167.6 253.1 172.0 255.6 175.0 257.6 C178.0 259.6 182.6 263.1 184.1 264.2" stroke-width="1.03"/>
<path d="M172.0 252.6 L178.0 256.4" stroke-width="0.80"/>
<path d="M178.0 251.0 C176.5 249.1 172.2 244.1 169.0 239.5 C165.8 234.9 161.6 228.6 159.0 223.7 C156.4 218.8 154.4 212.3 153.5 210.0" stroke-width="1.15"/>
<path d="M153.5 210.0 C152.8 210.5 150.5 212.4 149.0 213.0 C147.5 213.6 145.2 213.5 144.5 213.6" stroke-width="1.03"/>
<path d="M151.5 203.0 C151.0 201.8 149.3 198.9 148.6 196.0 C147.9 193.1 147.2 189.1 147.4 185.6 C147.6 182.1 148.4 178.5 149.5 175.0 C150.6 171.5 152.2 168.1 154.0 164.6 C155.8 161.1 158.4 156.8 160.0 154.0 C161.6 151.2 162.9 148.6 163.5 147.5" stroke-width="1.03"/>
<path d="M159.3 163.8 C158.5 165.7 155.6 171.4 154.5 175.0 C153.4 178.6 152.7 181.8 152.5 185.6 C152.3 189.4 153.2 195.7 153.3 197.7" stroke-width="0.80"/>
<path d="M150.1 143.7 C151.1 143.6 153.9 144.1 156.0 143.4 C158.1 142.8 161.4 140.4 162.5 139.8" stroke-width="1.15"/>
<path d="M162.5 139.8 C164.4 137.8 170.8 130.6 173.7 127.5 C176.6 124.4 178.9 122.4 180.0 121.4" stroke-width="0.80"/>
<path d="M190.8 92.5 C191.4 93.5 192.6 96.8 194.4 98.5 C196.2 100.2 199.6 101.5 201.7 102.4 C203.8 103.3 206.1 103.7 207.0 104.0" stroke-width="1.26"/>
<path d="M201.7 102.4 C203.1 101.8 207.3 100.2 210.0 99.0 C212.7 97.8 216.7 95.7 218.0 95.0" stroke-width="0.92"/>
<path d="M223.0 76.6 C223.8 77.7 226.2 81.6 228.0 83.2 C229.8 84.8 231.8 85.5 234.0 86.2 C236.2 86.9 239.8 87.3 241.0 87.5" stroke-width="1.26"/>
<path d="M240.0 68.1 C241.1 69.3 244.2 73.4 246.8 75.4 C249.4 77.4 253.3 79.4 255.8 80.3 C258.3 81.2 261.0 80.5 262.0 80.6" stroke-width="1.26"/>
<path d="M262.0 78.5 C263.1 78.5 265.8 78.5 268.4 78.6 C271.0 78.6 274.2 78.5 277.5 78.8 C280.8 79.1 284.7 79.7 288.3 80.6 C291.9 81.5 297.2 83.8 299.0 84.4" stroke-width="0.92"/>
<path d="M295.5 75.9 C295.8 76.6 296.3 78.6 297.0 80.0 C297.7 81.4 298.5 83.0 299.5 84.5 C300.5 86.0 302.4 88.2 303.0 89.0" stroke-width="1.15"/>
<path d="M304.6 87.5 C305.9 87.7 309.3 86.9 312.5 88.5 C315.7 90.1 320.3 93.8 323.7 97.0 C327.1 100.2 331.4 105.8 333.0 107.5" stroke-width="0.92"/>
<path d="M330.0 87.7 C330.8 88.6 333.4 90.8 334.5 93.0 C335.6 95.2 336.6 98.3 336.5 101.0 C336.4 103.7 334.4 107.7 334.0 109.0" stroke-width="1.15"/>
<path d="M340.6 107.5 C341.8 107.1 345.2 105.5 348.0 105.0 C350.8 104.5 354.7 103.9 357.5 104.6 C360.3 105.3 363.8 108.3 365.0 109.0" stroke-width="1.03"/>
<path d="M352.0 111.0 C353.3 111.1 357.4 110.4 360.0 111.6 C362.6 112.8 366.3 116.9 367.6 118.0" stroke-width="1.03"/>
<path d="M348.0 112.0 C349.2 112.8 353.2 115.4 355.0 117.0 C356.8 118.6 358.3 120.8 359.0 121.5" stroke-width="1.03"/>
<path d="M359.0 121.5 C360.2 122.9 363.8 125.7 366.5 129.7 C369.2 133.7 372.8 140.5 375.4 145.4 C378.0 150.3 380.3 154.9 382.2 159.0 C384.1 163.1 385.1 166.7 386.5 170.0 C387.9 173.3 388.3 176.7 390.3 178.9 C392.3 181.1 397.0 182.7 398.4 183.4" stroke-width="0.92"/>
<path d="M389.0 186.0 C389.7 186.5 391.9 188.2 393.0 189.0 C394.1 189.8 395.2 190.3 395.7 190.6" stroke-width="0.92"/>
<path d="M386.8 193.3 C386.9 195.0 388.0 200.1 387.5 203.6 C387.0 207.1 385.5 210.3 384.0 214.5 C382.5 218.7 379.6 226.2 378.7 228.5" stroke-width="0.92"/>
<path d="M372.0 150.0 C373.2 152.2 377.2 158.7 379.0 163.0 C380.8 167.3 382.3 173.8 383.0 176.0" stroke-width="0.80"/>
<path d="M281.0 116.0 C282.5 115.0 287.0 111.5 290.0 110.0 C293.0 108.5 297.5 107.5 299.0 107.0" stroke-width="0.92"/>
<path d="M272.0 133.0 C273.5 131.8 277.2 128.2 281.0 126.0 C284.8 123.8 292.7 121.0 295.0 120.0" stroke-width="0.92"/>
<path d="M303.0 108.0 C304.7 107.7 310.2 105.7 313.0 106.0 C315.8 106.3 318.5 108.3 320.0 110.0 C321.5 111.7 321.7 115.0 322.0 116.0" stroke-width="0.92"/>
<path d="M305.0 120.0 L306.5 122.0" stroke-width="0.80"/>
<path d="M309.0 136.0 C310.3 134.7 313.8 130.0 317.0 128.0 C320.2 126.0 326.2 124.7 328.0 124.0" stroke-width="0.92"/>
<path d="M311.0 141.0 L320.0 133.0" stroke-width="0.80"/>
<path d="M331.0 131.0 C330.8 132.5 330.1 137.2 329.5 140.0 C328.9 142.8 328.0 146.7 327.7 148.0" stroke-width="0.92"/>
<path d="M333.0 112.0 L334.0 109.0" stroke-width="0.92"/>
<path d="M352.0 124.0 L355.0 121.0" stroke-width="0.92"/>
<path d="M327.7 148.0 C327.2 149.5 325.7 154.4 325.0 157.0 C324.3 159.6 324.3 161.1 323.5 163.6 C322.7 166.1 321.2 169.0 320.0 172.0 C318.8 175.0 318.0 178.7 316.3 181.7 C314.6 184.7 312.2 187.6 310.0 190.0 C307.8 192.4 304.3 195.3 303.2 196.4" stroke-width="0.80"/>
<path d="M307.2 184.0 C307.8 181.7 309.8 174.9 310.9 170.0 C312.0 165.1 313.2 157.3 313.7 154.8" stroke-width="0.80"/>
<path d="M313.7 154.8 C312.1 156.9 307.3 163.7 304.2 167.2 C301.1 170.7 298.2 173.4 295.0 176.0 C291.8 178.6 287.9 181.0 285.0 182.9 C282.1 184.8 279.0 186.5 277.8 187.2" stroke-width="0.80"/>
<path d="M294.2 153.6 C292.9 155.0 288.9 158.4 286.6 162.2 C284.4 166.0 282.6 172.1 280.7 176.3 C278.8 180.5 276.2 185.5 275.3 187.3" stroke-width="0.80"/>
<path d="M275.3 169.8 C275.9 167.8 277.9 161.2 279.0 157.9 C280.1 154.7 281.3 151.6 281.8 150.3" stroke-width="0.80"/>
<path d="M281.8 150.3 C280.8 151.2 277.7 154.3 276.0 156.0 C274.3 157.7 272.8 158.2 271.5 160.5 C270.2 162.8 269.2 166.3 268.2 169.8 C267.2 173.3 266.2 177.4 265.5 181.7 C264.8 186.0 264.2 193.5 263.9 195.8" stroke-width="0.80"/>
<path d="M271.5 160.5 C270.6 161.6 267.9 164.1 266.0 167.0 C264.1 169.9 262.0 174.5 260.0 178.0 C258.0 181.5 256.3 184.9 254.0 188.0 C251.7 191.1 247.5 195.2 246.2 196.6" stroke-width="0.80"/>
<path d="M262.0 155.5 C261.3 158.4 259.7 167.8 258.0 173.0 C256.3 178.2 254.0 183.1 252.0 187.0 C250.0 190.9 247.2 195.0 246.2 196.6" stroke-width="0.80"/>
<path d="M261.0 155.5 C259.5 157.4 254.5 162.9 252.0 167.0 C249.5 171.1 247.7 175.7 246.0 180.0 C244.3 184.3 242.7 190.8 242.0 193.0" stroke-width="0.80"/>
<path d="M245.5 158.0 C244.4 160.8 240.2 169.7 239.0 175.0 C237.8 180.3 238.2 186.2 238.4 190.0 C238.6 193.8 240.0 196.7 240.3 198.0" stroke-width="0.80"/>
<path d="M221.0 197.0 C221.5 195.0 223.1 188.7 224.0 185.0 C224.9 181.3 225.6 178.5 226.5 175.0 C227.4 171.5 228.8 165.7 229.3 163.8" stroke-width="0.80"/>
<path d="M219.1 168.0 C218.2 170.0 215.0 176.2 214.0 180.0 C213.0 183.8 213.2 187.0 213.0 191.0 C212.8 195.0 213.0 201.9 213.0 204.1" stroke-width="0.80"/>
<path d="M213.0 204.1 C212.1 202.4 208.7 198.0 207.5 194.0 C206.3 190.0 205.7 184.7 205.9 180.0 C206.1 175.3 208.4 168.0 208.9 165.6" stroke-width="0.80"/>
<path d="M208.9 165.6 C207.7 168.0 203.5 174.6 201.7 180.0 C199.9 185.4 198.9 192.3 198.0 198.0 C197.1 203.7 196.7 211.3 196.4 214.0" stroke-width="0.80"/>
<path d="M196.4 214.0 C195.8 211.3 194.0 204.2 193.0 198.0 C192.0 191.8 190.7 180.5 190.2 177.0" stroke-width="0.80"/>
<path d="M190.2 177.0 C189.6 180.0 187.3 189.4 186.5 195.0 C185.7 200.6 185.5 207.8 185.3 210.4" stroke-width="0.80"/>
<path d="M323.5 163.6 C323.4 166.0 323.2 172.6 323.2 178.0 C323.2 183.4 322.9 190.6 323.5 196.0 C324.1 201.4 325.7 206.8 326.8 210.5 C327.9 214.2 329.6 216.8 330.2 218.0" stroke-width="0.92"/>
<path d="M335.0 229.6 C334.7 230.7 334.1 233.7 333.0 236.0 C331.9 238.3 329.0 242.0 328.2 243.2" stroke-width="0.80"/>
<path d="M345.2 203.6 C344.9 206.0 344.3 213.4 343.5 218.0 C342.7 222.6 341.3 226.3 340.5 231.0 C339.7 235.7 338.8 243.5 338.5 246.0" stroke-width="0.80"/>
<path d="M332.5 181.0 C332.4 183.7 331.0 192.8 331.6 197.0 C332.2 201.2 335.3 204.5 336.0 206.0" stroke-width="0.80"/>
<path d="M380.0 212.0 C379.0 214.0 376.0 220.3 374.0 224.0 C372.0 227.7 369.0 232.3 368.0 234.0" stroke-width="0.80"/>
<path d="M376.0 222.0 L371.0 231.5" stroke-width="0.80"/>
<path d="M185.3 210.4 C184.8 213.0 182.9 221.2 182.0 226.0 C181.1 230.8 180.3 235.3 179.6 239.5 C178.9 243.7 178.3 249.1 178.0 251.0" stroke-width="0.80"/>
<path d="M170.0 205.0 C170.3 208.3 171.0 218.7 172.0 225.0 C173.0 231.3 175.3 240.0 176.0 243.0" stroke-width="0.80"/>
<path d="M163.0 200.0 C163.3 203.0 163.8 212.0 165.0 218.0 C166.2 224.0 169.2 233.0 170.0 236.0" stroke-width="0.80"/>
<path d="M340.6 306.5 C340.4 308.4 339.8 314.2 339.5 318.0 C339.2 321.8 339.2 323.4 339.0 329.0 C338.8 334.6 338.4 347.8 338.3 351.5" stroke-width="1.03"/>
<path d="M237.5 269.7 C236.8 271.1 233.0 275.0 233.3 278.0 C233.6 281.0 238.4 286.1 239.4 287.7" stroke-width="1.38"/>
<path d="M233.0 309.3 C235.0 309.1 239.7 308.2 245.0 307.8 C250.3 307.4 260.3 307.0 264.6 307.0 C268.9 307.0 269.1 306.7 271.0 308.0 C272.9 309.3 275.1 313.5 275.9 314.6" stroke-width="1.72"/>
<path d="M233.0 309.3 C233.5 310.2 234.8 313.4 236.0 315.0 C237.2 316.6 239.8 318.4 240.5 319.1" stroke-width="1.72"/>
<path d="M240.5 319.1 C243.4 318.9 252.5 318.4 258.0 318.0 C263.5 317.6 270.6 317.4 273.6 316.8 C276.6 316.2 275.5 315.0 275.9 314.6" stroke-width="1.72"/>
<path d="M236.5 312.4 L241.5 312.0" stroke-width="1.61"/>
<path d="M245.0 329.3 L254.0 328.4" stroke-width="1.26"/>
<path d="M249.7 212.2 C250.0 212.8 250.8 214.3 251.4 215.6 C252.0 216.8 253.2 219.0 253.5 219.7" stroke-width="1.03"/>
<path d="M247.3 216.4 L247.9 217.2" stroke-width="0.69"/>
<path d="M278.3 274.3 C279.2 273.8 282.1 271.8 284.0 271.0 C285.9 270.2 288.8 269.8 289.7 269.5" stroke-width="0.92"/>
<path d="M282.5 273.0 L288.5 271.3" stroke-width="0.80"/>
<path d="M291.0 273.0 L294.0 271.8" stroke-width="0.80"/>
<path d="M200.0 270.0 L204.0 271.5" stroke-width="0.80"/>
<path d="M200.9 268.3 C202.4 268.2 206.7 267.9 210.0 267.6 C213.3 267.3 218.9 266.9 220.7 266.7" stroke-width="1.15"/>
<path d="M217.0 269.2 L221.3 269.0" stroke-width="0.92"/>
<path d="M281.3 256.5 C283.1 256.2 288.3 255.4 292.0 255.0 C295.7 254.6 301.6 254.1 303.5 253.9" stroke-width="1.15"/>
<path d="M281.5 258.0 L285.0 257.4" stroke-width="0.92"/>
<path d="M263.3 363.8 C263.5 366.5 264.2 374.7 264.5 380.0 C264.8 385.3 265.4 390.7 265.0 395.7 C264.6 400.7 263.3 406.8 262.0 410.0 C260.7 413.2 257.8 414.2 257.0 415.0" stroke-width="1.49"/>
<path d="M338.3 351.5 C338.7 354.5 339.3 363.9 340.6 369.5 C341.9 375.1 343.6 380.2 346.2 385.2 C348.8 390.2 354.8 397.0 356.5 399.4" stroke-width="1.49"/>
<path d="M245.9 403.5 C247.4 403.0 251.9 401.8 255.0 400.5 C258.1 399.2 262.9 396.5 264.5 395.7" stroke-width="1.15"/>
<path d="M259.7 368.6 C256.1 370.3 244.2 375.8 238.0 378.9 C231.8 382.0 227.4 382.1 222.2 387.0 C216.9 391.9 211.5 402.1 206.5 408.4 C201.5 414.7 194.4 422.2 192.0 425.0" stroke-width="1.38"/>
<path d="M192.0 425.0 C191.0 425.8 186.9 428.7 186.2 430.0 C185.4 431.3 185.6 432.5 187.5 433.0 C189.4 433.5 193.2 434.0 197.5 433.0 C201.8 432.0 207.8 429.2 213.0 427.0 C218.2 424.8 226.3 420.8 229.0 419.6" stroke-width="1.38"/>
<path d="M229.0 419.6 C227.5 423.0 222.2 434.9 220.0 440.0 C217.8 445.1 215.9 446.8 215.5 450.0 C215.1 453.2 214.3 454.9 217.7 459.0 C221.1 463.1 229.3 469.8 235.7 474.7 C242.1 479.6 251.1 484.4 256.0 488.2 C260.9 492.0 263.5 495.9 265.0 497.5" stroke-width="1.38"/>
<path d="M227.5 421.0 L226.0 428.0" stroke-width="2.07"/>
<path d="M253.7 386.7 C252.2 389.8 246.4 397.8 244.7 405.3 C243.0 412.9 242.4 423.1 243.5 432.0 C244.6 440.9 248.7 450.2 251.4 459.0 C254.2 467.8 257.7 478.6 260.0 485.0 C262.3 491.4 264.3 495.6 265.2 497.7" stroke-width="1.15"/>
<path d="M244.7 429.7 L253.7 430.2" stroke-width="0.80"/>
<path d="M206.5 408.4 C201.2 411.6 183.2 421.7 175.0 427.5 C166.8 433.3 161.9 436.8 157.0 443.2 C152.1 449.6 149.3 456.7 145.7 465.7 C142.1 474.7 137.3 491.8 135.6 497.0" stroke-width="1.26"/>
<path d="M154.7 469.0 L158.0 497.0" stroke-width="0.80"/>
<path d="M144.6 475.8 L151.4 497.0" stroke-width="0.80"/>
<path d="M185.0 464.6 L173.8 497.0" stroke-width="0.80"/>
<path d="M249.5 486.0 L247.5 497.0" stroke-width="0.80"/>
<path d="M252.0 487.0 L250.5 497.0" stroke-width="0.80"/>
<path d="M339.5 352.6 C341.6 353.4 347.5 355.6 352.0 357.5 C356.5 359.4 363.0 360.7 366.5 363.8 C370.0 366.9 371.1 372.1 373.0 376.0 C374.9 379.9 375.3 382.2 377.8 387.0 C380.3 391.8 384.8 398.2 388.0 405.0 C391.2 411.8 394.0 420.8 397.0 427.5 C400.0 434.2 404.5 442.5 406.0 445.5" stroke-width="1.49"/>
<path d="M406.0 445.5 C405.3 445.8 403.5 447.1 402.0 447.5 C400.5 447.9 401.6 449.3 397.0 447.7 C392.4 446.1 381.5 439.9 374.4 437.6 C367.3 435.3 358.9 433.8 354.2 433.8 C349.5 433.8 347.6 437.0 346.3 437.6" stroke-width="1.49"/>
<path d="M346.3 437.6 C346.5 440.0 346.9 447.7 347.5 452.2 C348.1 456.7 349.3 462.5 349.7 464.6" stroke-width="1.49"/>
<path d="M349.7 464.6 C345.6 465.9 332.9 469.3 325.0 472.5 C317.1 475.7 308.8 479.5 302.5 483.7 C296.2 487.9 289.6 495.4 287.0 497.7" stroke-width="1.49"/>
<path d="M351.8 370.6 C353.0 372.0 356.7 376.2 359.0 379.0 C361.3 381.8 364.6 385.1 365.4 387.4 C366.2 389.7 365.3 391.2 364.0 393.0 C362.7 394.8 358.7 397.3 357.6 398.2" stroke-width="1.49"/>
<path d="M346.3 387.0 L357.6 398.2" stroke-width="1.49"/>
<path d="M356.5 399.4 C354.2 401.8 346.8 408.9 343.0 414.0 C339.2 419.1 336.4 424.1 334.0 429.7 C331.6 435.3 331.6 442.7 328.3 447.7 C325.0 452.7 319.6 454.5 314.0 459.5 C308.4 464.5 300.2 471.1 294.5 477.5 C288.8 483.9 282.0 494.3 279.5 497.7" stroke-width="2.18"/>
<path d="M327.2 428.6 L338.5 428.2" stroke-width="0.80"/>
<path d="M381.2 393.7 C385.3 395.2 399.5 400.4 406.0 402.7 C412.5 404.9 413.2 404.8 420.0 407.2 C426.8 409.6 440.2 414.2 447.0 417.4 C453.8 420.6 456.4 421.7 460.5 426.4 C464.6 431.1 467.9 438.2 471.7 445.5 C475.4 452.8 479.2 461.5 483.0 470.2 C486.8 478.9 492.3 492.9 494.2 497.5" stroke-width="1.49"/>
<path d="M296.0 491.0 L297.5 497.0" stroke-width="0.69"/>
<path d="M293.0 490.0 L299.0 489.0" stroke-width="0.69"/>
</g>
<g fill="none" stroke-linecap="round" stroke-linejoin="round" filter="url(#soft)">
<path d="M184.0 216.8 C186.5 216.6 194.5 215.3 199.0 215.4 C203.5 215.5 207.1 216.3 211.0 217.2 C214.9 218.0 220.6 219.9 222.5 220.5" stroke="#3a2018" stroke-width="2.2"/>
<path d="M186.0 216.6 C188.2 216.4 194.8 215.2 199.0 215.3 C203.2 215.4 207.3 216.3 211.0 217.0 C214.7 217.7 219.3 219.2 221.0 219.7" stroke="#8a5c48" stroke-width="1.0"/>
<path d="M218.0 219.0 L222.8 221.0" stroke="#3a2018" stroke-width="2.6"/>
<path d="M259.6 214.8 C260.4 215.0 261.0 217.2 264.4 215.9 C267.8 214.6 274.4 209.6 280.0 207.2 C285.6 204.8 292.1 202.1 298.0 201.2 C303.9 200.3 312.7 201.5 315.6 201.6" stroke="#3a2018" stroke-width="1.6"/>
<path d="M262.0 215.0 C265.0 213.7 274.0 209.3 280.0 207.0 C286.0 204.7 292.7 202.1 298.0 201.2 C303.3 200.3 309.7 201.4 312.0 201.4" stroke="#8a5c48" stroke-width="0.7"/>
<path d="M208.7 225.9 C209.6 226.2 212.1 226.7 214.0 227.5 C215.9 228.3 219.0 230.2 220.0 230.7" stroke="#3a2018" stroke-width="0.8"/>
<path d="M268.6 221.5 C269.7 221.0 272.7 219.3 275.0 218.5 C277.3 217.7 281.2 217.0 282.5 216.7" stroke="#3a2018" stroke-width="0.8"/>
<path d="M185.0 241.2 C185.8 240.6 187.9 238.7 189.5 237.6 C191.1 236.5 192.8 235.4 194.5 234.6 C196.2 233.8 198.0 233.2 200.0 232.7 C202.0 232.2 204.3 231.9 206.3 231.8 C208.3 231.7 210.2 231.9 212.0 232.2 C213.8 232.5 215.4 233.1 217.0 233.8 C218.6 234.5 220.1 235.5 221.5 236.6 C222.9 237.7 224.6 239.8 225.2 240.4" stroke="#3a2018" stroke-width="4.2"/>
<path d="M186.4 240.0 C187.8 239.1 192.2 235.8 194.5 234.6 C196.8 233.4 198.0 233.2 200.0 232.7 C202.0 232.2 204.3 231.9 206.3 231.8 C208.3 231.7 210.2 231.9 212.0 232.2 C213.8 232.5 215.1 232.7 217.0 233.8 C218.9 234.9 222.5 237.8 223.6 238.6" stroke="#8a5c48" stroke-width="2.5"/>
<path d="M184.6 241.0 L183.0 244.0" stroke="#3a2018" stroke-width="0.8"/>
<path d="M187.0 241.0 L185.5 245.6" stroke="#3a2018" stroke-width="0.8"/>
<path d="M267.0 231.6 C267.8 230.9 270.0 228.8 272.0 227.5 C274.0 226.2 276.8 224.8 279.0 223.7 C281.2 222.6 283.3 221.8 285.5 221.2 C287.7 220.6 289.9 220.2 292.0 220.0 C294.1 219.8 296.0 219.7 298.0 219.8 C300.0 219.9 302.2 220.2 304.0 220.6 C305.8 221.0 307.1 221.5 308.5 222.2 C309.9 222.9 311.9 224.4 312.6 224.8" stroke="#3a2018" stroke-width="4.3"/>
<path d="M268.4 230.4 C269.0 229.9 270.2 228.6 272.0 227.5 C273.8 226.4 276.8 224.8 279.0 223.7 C281.2 222.6 283.3 221.8 285.5 221.2 C287.7 220.6 289.9 220.2 292.0 220.0 C294.1 219.8 296.0 219.7 298.0 219.8 C300.0 219.9 302.2 220.2 304.0 220.6 C305.8 221.0 307.2 221.6 308.5 222.2 C309.8 222.8 311.1 223.7 311.6 224.0" stroke="#8a5c48" stroke-width="2.6"/>
<path d="M312.6 224.8 C312.9 225.5 314.0 227.6 314.2 229.0 C314.4 230.4 313.9 231.7 313.6 233.0 C313.3 234.3 312.4 236.3 312.2 237.0" stroke="#3a2018" stroke-width="3.0"/>
<path d="M312.8 225.6 C313.0 226.2 313.9 227.8 314.0 229.0 C314.1 230.2 313.7 231.8 313.4 233.0 C313.1 234.2 312.6 235.5 312.4 236.0" stroke="#8a5c48" stroke-width="1.6"/>
<path d="M312.5 222.6 L317.5 221.4" stroke="#3a2018" stroke-width="0.9"/>
<path d="M314.0 225.0 L318.0 225.5" stroke="#3a2018" stroke-width="0.9"/>
<path d="M266.6 231.5 L264.5 234.5" stroke="#3a2018" stroke-width="0.8"/>
<path d="M268.4 232.5 L266.3 237.0" stroke="#3a2018" stroke-width="0.8"/>
<path d="M270.2 233.0 L268.6 236.6" stroke="#3a2018" stroke-width="0.8"/>
</g>
</svg>
<div id="status" class="abs"><span style="left:3.1px;font-size:5.9px">iPad</span><span style="left:322px;font-weight:bold;font-size:5.8px">12:11 AM</span><span style="left:638px;font-size:6px">70%</span></div>
<div id="menubar" class="abs"><span style="left:26px">File</span><span style="left:44.6px">Edit</span><span style="left:64px">Animation</span><span style="left:101.6px">Layer</span><span style="left:125.6px">Select</span><span style="left:152.6px">View</span><span style="left:175.8px">Filter</span><span style="left:199px">Window</span><span style="left:229.6px">Help</span></div>
<div id="lhead" class="abs"></div>
<div id="ltools" class="abs"></div>
<div id="lsub" class="abs"></div>
<div id="lborder" class="abs"></div>
<div id="cmdbar" class="abs"></div>
<div id="tabbar" class="abs"><div id="tab1" class="tab">Illustration18(R...</div><div id="tab2" class="tab">Illustration19[Restore]* (Postcard 3.94 x 5.83in 600dpi 196.5%)</div></div>
<div id="tabdd" class="abs"></div>
<div id="rpanel" class="abs"></div>
<div id="rhead" class="abs"></div>
<div id="rfar" class="abs"></div>
<div id="bottom" class="abs"></div>
<svg id="icons" width="667" height="499" viewBox="0 0 667 499">
<g fill="none" stroke="#f4f4f4" stroke-width="0.95" stroke-linecap="round"><path d="M18.1 2.9 Q21.4 0.2 24.7 2.9"/><path d="M19.2 4.2 Q21.4 2.4 23.6 4.2"/><path d="M20.3 5.4 Q21.4 4.5 22.5 5.4"/></g><circle cx="21.4" cy="6.2" r="0.6" fill="#f4f4f4"/>
<path d="M631.5 2.8 L634.6 5.4 L633.1 6.8 L633.1 1.4 L634.6 2.8 L631.5 5.4" fill="none" stroke="#f2f2f2" stroke-width="0.6"/>
<rect x="652" y="2.1" width="11.4" height="4.4" rx="0.9" fill="none" stroke="#f0f0f2" stroke-width="0.6"/><rect x="652.6" y="2.7" width="6.5" height="3.2" fill="#f8f8f8"/><rect x="663.8" y="3.5" width="0.8" height="1.6" fill="#e4e4e6"/>
<rect x="0" y="20" width="667" height="0.7" fill="#525254"/>
<path d="M12.8 14.5 Q9 15.1 8.4 13.2 Q8.2 11.2 12 11 Q15.8 11 15.8 13.2 Q15.6 15.2 12.8 16 Q10.9 16.6 11.3 17.5 Q11.9 18.1 12.9 17.6" fill="none" stroke="#0a0a0a" stroke-width="1.25" stroke-linecap="round"/>
<path d="M2.9 22.5 l-1.9 2.7 l1.9 2.7 M5.6 22.5 l-1.9 2.7 l1.9 2.7" fill="none" stroke="#cfcfd1" stroke-width="1.05"/>
<path d="M28.1 22.5 l-1.9 2.7 l1.9 2.7 M30.8 22.5 l-1.9 2.7 l1.9 2.7" fill="none" stroke="#cfcfd1" stroke-width="1.05"/>
<path d="M41.4 22.5 l1.9 2.7 l-1.9 2.7" fill="none" stroke="#cfcfd1" stroke-width="1.05"/>
<rect x="24.3" y="20.5" width="0.8" height="9.5" fill="#505052"/>
<path d="M19.5 23.5 v3.5 M21.8 23.5 v3.5" stroke="#77777a" stroke-width="0.5"/>
<rect x="0" y="30" width="24.1" height="13.4" fill="#6a6a6c"/>
<rect x="1.2" y="33" width="10.4" height="8.6" fill="#565658"/>
<rect x="11.8" y="33.4" width="12.4" height="9" fill="#7b7b7d"/>
<path d="M5 35.6 l1.8 1.5 l-1.8 1.5 z M7.6 35.4 v3.4" fill="#9a9a9c" stroke="#9a9a9c" stroke-width="0.5"/>
<path d="M18 34.5 v6" stroke="#d8d8d8" stroke-width="0.7" stroke-dasharray="1.2 0.9"/><rect x="16.8" y="41.4" width="2.6" height="1.4" rx="0.5" fill="#111"/>
<rect x="0" y="43.2" width="24.1" height="0.7" fill="#5a5a5c"/>
<rect x="0" y="30" width="1.6" height="469" fill="#5e5e60"/>
<rect x="1.6" y="173.8" width="22.5" height="0.8" fill="#5e5e60"/><rect x="1.6" y="174.6" width="22.5" height="0.6" fill="#8a8a8d"/>
<rect x="1.6" y="303.9" width="22.5" height="0.8" fill="#5e5e60"/><rect x="1.6" y="304.7" width="22.5" height="0.6" fill="#8a8a8d"/>
<rect x="1.6" y="451.6" width="22.5" height="47.4" fill="#7e7e81"/>
<rect x="3.8" y="264.6" width="17.4" height="17.4" fill="#8a9caa"/>
<circle cx="12.2" cy="52.2" r="2.4" fill="#e2e2e2" stroke="#f6f6f6" stroke-width="0.8"/><path d="M14.2 54.4 L16 56.8" stroke="#2a2a2a" stroke-width="1.2" stroke-linecap="round"/><circle cx="11.9" cy="52.6" r="0.8" fill="#5a5a5a"/>
<g transform="translate(12.8 71) scale(0.84) translate(-12.8 -71)"><path d="M10.4 74.6 L9 71.6 L8.2 69.4 L9.2 69 L10.4 70.8 L9.8 67.4 L10.9 67.1 L11.9 70 L12.2 66.5 L13.3 66.5 L13.6 70 L14.8 67.2 L15.8 67.6 L15.2 70.8 L16.6 69.4 L17.3 70.1 L15.6 72.8 L15 74.6 Z" fill="#f6f6f6"/><rect x="10.4" y="74" width="4.7" height="1.5" fill="#f6f6f6"/></g>
<ellipse cx="11.8" cy="88" rx="3.1" ry="2.7" fill="#d8d8d8" stroke="#f2f2f2" stroke-width="0.8"/><path d="M13.6 89.6 l1.7 2.5 l1.1 -0.7 l-1.6 -2.5" fill="#f8f8f8" stroke="#555" stroke-width="0.4"/>
<path d="M9 104 l7 6 M12.6 103.2 l-0.4 7.6 M8.8 107.6 l7.4 -1" stroke="#5a5a5c" stroke-width="0.8" fill="none"/><path d="M8.6 103.4 l2.4 0.6 l-1.6 1.6 z" fill="#4e4e50"/>
<ellipse cx="12.4" cy="124.6" rx="4.2" ry="2.3" transform="rotate(-12 12.4 124.6)" fill="none" stroke="#5c5c5e" stroke-width="0.8"/><path d="M9 126.4 l-0.4 1.8" stroke="#5c5c5e" stroke-width="0.8"/>
<path d="M12 143.6 L15 147" stroke="#e6e6e6" stroke-width="1.1" stroke-linecap="round"/><path d="M10.8 140.4 l0.55 1.25 l1.35 0.25 l-1.05 0.95 l0.25 1.35 l-1.1 -0.7 l-1.1 0.7 l0.25 -1.35 l-1.05 -0.95 l1.35 -0.25 z" fill="#efefef"/>
<path d="M10.2 164.8 L13.6 159.6" stroke="#4a4a4c" stroke-width="1" stroke-linecap="round"/><path d="M13.2 160.2 l1.6 -2.2" stroke="#d0d0d0" stroke-width="1.1" stroke-linecap="round"/>
<rect x="7.8" y="178" width="9.8" height="9.6" fill="#e9e05a"/><path d="M13.2 178 h4.4 v3.6 z" fill="#111"/><path d="M8.6 184.6 q2 -2.4 3.6 -0.8 q1.4 1.4 3.6 -1.4 M9.6 186.4 q2.6 0.8 5 -1.4" stroke="#111" stroke-width="1" fill="none"/>
<path d="M10.6 196.8 L15 203 L15.2 205.4 L12.8 204.6 L8.8 198.4 Z" fill="#f4f4f4"/><path d="M13.6 204.2 l1.6 1.4" stroke="#333" stroke-width="0.8"/>
<path d="M15.4 214.8 L10.2 221" stroke="#f4f4f4" stroke-width="1.2" stroke-linecap="round"/><path d="M9 221.6 Q11 224.4 15.8 223.2" stroke="#b8cfe6" stroke-width="1.3" fill="none" stroke-linecap="round"/>
<rect x="9.6" y="237.8" width="5.2" height="4.4" rx="1.2" fill="#f2f2f2"/><rect x="10.6" y="235.6" width="3" height="2" fill="#e6e6e6"/><path d="M9.6 239.8 h5.2" stroke="#555" stroke-width="0.5"/><path d="M14.6 235.8 l2 -1.6 M14.8 236.6 l2.2 -0.2" stroke="#d8d8d8" stroke-width="0.5"/>
<g stroke="#3e3e40" stroke-width="0.7"><path d="M9.4 255.2 h6 M12.4 252.2 v6 M10.2 253 l4.4 4.4 M14.6 253 l-4.4 4.4"/></g><circle cx="12.4" cy="255.2" r="1.5" fill="#3a3a3c"/>
<path d="M10 270.4 L15.6 269.4 L16.4 272.2 L10.8 273.4 Z" fill="#fafafa"/><path d="M9.2 274.4 L14.6 273.4 L15.4 276 L10 277.2 Z" fill="#f0f0f0"/><path d="M10.8 273.4 L16.4 272.2 L15.4 276 L14.6 273.4 Z" fill="#c8d0d8"/>
<path d="M10.6 288.6 q-2.6 3.4 -0.6 5.6 q1.4 0.8 1.4 -0.4 z" fill="#2e2e30"/><path d="M14 288.2 q-3 4 -1.2 6 q1.8 1.4 3.2 -0.2 q1.2 -2 -2 -5.8 z" fill="#f6f6f6"/>
<path d="M9.6 313.4 L13.8 309.8 L17.2 313.6 L13 317.4 Z" fill="#f6f6f6"/><path d="M9.6 313.4 Q8 314.8 8.4 317" stroke="#1c1c1c" stroke-width="1" fill="none"/><path d="M11.6 311 Q12.6 309.4 14.4 310" stroke="#333" stroke-width="0.6" fill="none"/>
<defs><linearGradient id="gr1" x1="0" y1="0" x2="1" y2="1"><stop offset="0" stop-color="#fff"/><stop offset="1" stop-color="#111"/></linearGradient><linearGradient id="gr2" x1="0" y1="0" x2="0" y2="1"><stop offset="0" stop-color="#7c7c7e"/><stop offset="1" stop-color="#5e5e60"/></linearGradient></defs>
<rect x="8.3" y="327.4" width="8.2" height="8.6" fill="url(#gr1)" stroke="#333" stroke-width="0.5"/>
<rect x="8.3" y="345.2" width="7.6" height="8.6" fill="url(#gr2)"/>
<g fill="none" stroke="#5c5c5e" stroke-width="0.6"><rect x="9.4" y="364.2" width="5.8" height="8"/><path d="M9.4 367 h5.8 M12.3 367 v5.2"/></g>
<path d="M8.6 383.4 L8.6 389.6 L15.6 389.6 Z" fill="#b4ddf4" stroke="#8fc6e8" stroke-width="0.5"/><path d="M10.2 386.4 v1.8 h1.8 z" fill="#74747a"/>
<ellipse cx="12.3" cy="421" rx="4.7" ry="3.6" fill="#fbfbfb"/><path d="M13.6 423.6 l1.6 2 l-0.2 -2.6 z" fill="#fbfbfb"/>
<path d="M11.4 435.4 L11.8 442.4" stroke="#f4f4f4" stroke-width="1.1"/><path d="M12 436.6 L14.6 441.4" stroke="#2e2e30" stroke-width="0.9"/>
<rect x="1.2" y="453.2" width="14.1" height="13.8" fill="#000"/>
<rect x="9.6" y="461" width="13.8" height="14" fill="#7d98b6"/><rect x="10.3" y="461.7" width="12.4" height="12.6" fill="#44679a" stroke="#c9d6e4" stroke-width="0.5"/><rect x="12" y="463.4" width="9" height="9.2" fill="#3d6092"/>
<rect x="1.2" y="453.2" width="14.1" height="13.8" fill="#000"/>
<rect x="1.5" y="477" width="21.9" height="5.6" fill="#fff"/>
<rect x="1.50" y="477.00" width="2.74" height="2.8" fill="#9a9a9c"/><rect x="4.24" y="479.80" width="2.74" height="2.8" fill="#9a9a9c"/><rect x="6.98" y="477.00" width="2.74" height="2.8" fill="#9a9a9c"/><rect x="9.72" y="479.80" width="2.74" height="2.8" fill="#9a9a9c"/><rect x="12.46" y="477.00" width="2.74" height="2.8" fill="#9a9a9c"/><rect x="15.20" y="479.80" width="2.74" height="2.8" fill="#9a9a9c"/><rect x="17.94" y="477.00" width="2.74" height="2.8" fill="#9a9a9c"/><rect x="20.68" y="479.80" width="2.74" height="2.8" fill="#9a9a9c"/>
<circle cx="35.8" cy="42.3" r="5.6" fill="#98989a" stroke="#111" stroke-width="1.3"/><path d="M36 42.4 L41.4 47.8" stroke="#0e0e0e" stroke-width="1.7" stroke-linecap="round"/><path d="M34.8 41.2 l3.6 0.2 l-3.4 3.2 z" fill="#1a1a1a"/>
<g transform="translate(34.0 66.9)"><path d="M-0.6 -3.4 L3.6 -3.4 L3.0 -1.6 L-1.2 -1.6 Z" fill="#b9b9bb" stroke="#b9b9bb" stroke-width="0.9" stroke-linejoin="round"/><path d="M-2.0 -0.9 L2.6 -0.9 L2.0 1.1 L-2.6 1.1 Z" fill="#f2f2f2" stroke="#f2f2f2" stroke-width="0.9" stroke-linejoin="round"/><path d="M-3.2 2.0 L1.4 2.0 L0.8 4.0 L-3.8 4.0 Z" fill="#fcfcfc" stroke="#fcfcfc" stroke-width="0.9" stroke-linejoin="round"/><path d="M-2.8 1.75 l5 -0.1" stroke="#4a4a4c" stroke-width="0.45"/></g>
<g fill="#d4d4d6"><circle cx="39.6" cy="62.6" r="0.8"/><circle cx="39.8" cy="66.4" r="0.8"/><circle cx="39.8" cy="70.2" r="0.8"/></g>
<g transform="translate(34.0 87.6)"><path d="M-0.6 -3.4 L3.6 -3.4 L3.0 -1.6 L-1.2 -1.6 Z" fill="#b9b9bb" stroke="#b9b9bb" stroke-width="0.9" stroke-linejoin="round"/><path d="M-2.0 -0.9 L2.6 -0.9 L2.0 1.1 L-2.6 1.1 Z" fill="#f2f2f2" stroke="#f2f2f2" stroke-width="0.9" stroke-linejoin="round"/><path d="M-3.2 2.0 L1.4 2.0 L0.8 4.0 L-3.8 4.0 Z" fill="#fcfcfc" stroke="#fcfcfc" stroke-width="0.9" stroke-linejoin="round"/><path d="M-2.8 1.75 l5 -0.1" stroke="#4a4a4c" stroke-width="0.45"/></g>
<circle cx="39.7" cy="84.6" r="2.3" fill="#141414"/><g stroke="#141414" stroke-width="1.1"><path d="M39.7 81.2 v6.8 M36.3 84.6 h6.8 M37.3 82.2 l4.8 4.8 M42.1 82.2 l-4.8 4.8"/></g><circle cx="39.7" cy="84.6" r="0.8" fill="#5a5a5c"/>
<g transform="translate(34.0 108.4)"><path d="M-0.6 -3.4 L3.6 -3.4 L3.0 -1.6 L-1.2 -1.6 Z" fill="#b9b9bb" stroke="#b9b9bb" stroke-width="0.9" stroke-linejoin="round"/><path d="M-2.0 -0.9 L2.6 -0.9 L2.0 1.1 L-2.6 1.1 Z" fill="#f2f2f2" stroke="#f2f2f2" stroke-width="0.9" stroke-linejoin="round"/><path d="M-3.2 2.0 L1.4 2.0 L0.8 4.0 L-3.8 4.0 Z" fill="#fcfcfc" stroke="#fcfcfc" stroke-width="0.9" stroke-linejoin="round"/><path d="M-2.8 1.75 l5 -0.1" stroke="#4a4a4c" stroke-width="0.45"/></g>
<g fill="#101010"><circle cx="40" cy="104.4" r="1"/><circle cx="40.2" cy="108" r="1"/><circle cx="40.2" cy="111.8" r="1.1"/></g>
<circle cx="36" cy="133.8" r="6.3" fill="#f4f4f4"/><g><path d="M35.6 133.2 L29.87 132.29 A5.8 5.8 0 0 1 31.17 129.46 Z" fill="#e53935"/><path d="M35.6 133.2 L31.09 129.55 A5.8 5.8 0 0 1 33.63 127.74 Z" fill="#f4811f"/><path d="M35.6 133.2 L33.52 127.79 A5.8 5.8 0 0 1 36.62 127.49 Z" fill="#f6d622"/><path d="M35.6 133.2 L36.51 127.47 A5.8 5.8 0 0 1 39.34 128.77 Z" fill="#9acb34"/><path d="M35.6 133.2 L39.25 128.69 A5.8 5.8 0 0 1 41.06 131.23 Z" fill="#2fae4a"/><path d="M35.6 133.2 L41.01 131.12 A5.8 5.8 0 0 1 41.31 134.22 Z" fill="#21b39b"/><path d="M35.6 133.2 L41.33 134.11 A5.8 5.8 0 0 1 40.03 136.94 Z" fill="#1da7e0"/><path d="M35.6 133.2 L40.11 136.85 A5.8 5.8 0 0 1 37.57 138.66 Z" fill="#2b63c8"/><path d="M35.6 133.2 L37.68 138.61 A5.8 5.8 0 0 1 34.58 138.91 Z" fill="#3b35a8"/><path d="M35.6 133.2 L34.69 138.93 A5.8 5.8 0 0 1 31.86 137.63 Z" fill="#7a2fa8"/><path d="M35.6 133.2 L31.95 137.71 A5.8 5.8 0 0 1 30.14 135.17 Z" fill="#c22a8e"/><path d="M35.6 133.2 L30.19 135.28 A5.8 5.8 0 0 1 29.89 132.18 Z" fill="#e2306a"/></g><circle cx="35.6" cy="133.2" r="2.9" fill="#4a5a9a"/><circle cx="35.9" cy="133.5" r="1.5" fill="#27306a"/><path d="M33.9 132.6 a2 2 0 0 1 2.6 -1.4" fill="none" stroke="#9aa4d0" stroke-width="0.6"/>
<g><rect x="30.0" y="146.6" width="4" height="4" fill="#3f66c8"/><rect x="34.0" y="146.6" width="4" height="4" fill="#141428"/><rect x="38.0" y="146.6" width="4" height="4" fill="#cf3a3a"/><rect x="30.0" y="150.6" width="4" height="4" fill="#d23b33"/><rect x="34.0" y="150.6" width="4" height="4" fill="#d23b33"/><rect x="38.0" y="150.6" width="4" height="4" fill="#e9d86a"/><rect x="30.0" y="154.6" width="4" height="4" fill="#58a846"/><rect x="34.0" y="154.6" width="4" height="4" fill="#2f7a32"/><rect x="38.0" y="154.6" width="4" height="4" fill="#0c0c0c"/><circle cx="35.8" cy="152.8" r="2.5" fill="#f0e8ee" stroke="#d0322c" stroke-width="1"/><circle cx="35.8" cy="152.8" r="1" fill="#2a49b8"/></g>
<rect x="31.2" y="166.6" width="9.2" height="13" fill="#1c1c1c"/><rect x="32" y="167" width="7.6" height="2.2" fill="#e0564e"/><rect x="32" y="169.6" width="7.6" height="6.8" fill="#5aa2ea"/><rect x="32" y="176.8" width="7.6" height="2.2" fill="#7fd07a"/>
<g fill="#2c2c2e"><rect x="52.7" y="24.3" width="3.7" height="3.7"/><rect x="52.7" y="29.2" width="3.7" height="3.7"/><rect x="57.6" y="24.3" width="3.7" height="3.7"/><rect x="57.6" y="29.2" width="3.7" height="3.7"/></g>
<rect x="74.4" y="25" width="6" height="5" fill="#e8e8e8" stroke="#3a3a3c" stroke-width="0.6"/><path d="M75 29 l1.6 -2 l1.4 1.4 l1 -0.8 l1 1.4 z" fill="#3a3a3c"/><path d="M78.6 28.6 l2.6 3 l0.4 -1.6 l1.4 -0.2 z" fill="#fff" stroke="#222" stroke-width="0.4"/>
<path d="M89.7 27.4 l3 -3.2 l3 3.2 z M89.7 29.6 l3 3.2 l3 -3.2 z" fill="#424244"/>
<rect x="98" y="23.9" width="19.6" height="9" rx="1.3" fill="#ececec"/>
<path d="M103.2 30.6 Q101 27.4 104.6 25.6 Q109.4 24 110.8 27.4 Q111.6 31.2 107 31.6 Q103.8 31.2 104.8 28.6 Q106 26.6 108.2 27.8 Q109 29.4 107.2 29.8 Q106.2 29.6 106.6 28.8" fill="none" stroke="#111" stroke-width="0.85" stroke-linecap="round"/><circle cx="115.2" cy="26.2" r="1.1" fill="#d8262c"/>
<path d="M129.4 24.3 h4.2 l2.6 2.6 v5.9 h-6.8 z" fill="#f6f6f6"/><path d="M133.6 24.3 v2.6 h2.6" fill="#c8c8c8" stroke="#8a8a8a" stroke-width="0.3"/>
<path d="M147.8 27 h3 l0.8 0.9 h5 v4.9 h-8.8 z" fill="#f2f2f2"/><path d="M148.6 29 h9 l-1.2 3.8 h-8.6 z" fill="#fafafa" stroke="#8a8a8a" stroke-width="0.3"/><path d="M151.6 26 q2.2 -2 4.2 -0.4 l0.8 -0.8 l0.2 2.4 l-2.4 -0.2 l0.8 -0.8 q-1.4 -1 -3 0.4 z" fill="#2c2c2e"/>
<rect x="168.8" y="23.8" width="8.8" height="8.9" fill="#2c2c2e"/><rect x="170" y="24.2" width="6.4" height="6.2" fill="#f4f4f4"/><rect x="171" y="31.2" width="4.4" height="1.5" fill="#b8b8b8"/>
<path d="M185.2 27.4 l3 -3.2 l3 3.2 z M185.2 29.6 l3 3.2 l3 -3.2 z" fill="#424244"/>
<rect x="196.3" y="21.5" width="0.7" height="14" fill="#8e8e90"/><rect x="195.7" y="21.5" width="0.6" height="14" fill="#6c6c6e"/>
<path d="M205.6 25.6 h4.6 q2.5 0.2 2.5 2.5 q0 2.3 -2.5 2.5 h-4.6" fill="none" stroke="#2a2a2c" stroke-width="1.3"/><path d="M202.4 30.6 l3.4 -2.4 v4.8 z" fill="#2a2a2c"/>
<path d="M229.8 25.6 h-4.6 q-2.5 0.2 -2.5 2.5 q0 2.3 2.5 2.5 h4.6" fill="none" stroke="#6a6a6c" stroke-width="1.3"/><path d="M233 30.6 l-3.4 -2.4 v4.8 z" fill="#6a6a6c"/>
<rect x="241.3" y="21.5" width="0.7" height="14" fill="#8e8e90"/><rect x="240.7" y="21.5" width="0.6" height="14" fill="#6c6c6e"/>
<g fill="#1e1e20"><circle cx="255.73" cy="29.16" r="0.75"/><circle cx="254.32" cy="31.25" r="0.75"/><circle cx="251.84" cy="31.73" r="0.75"/><circle cx="249.75" cy="30.32" r="0.75"/><circle cx="249.27" cy="27.84" r="0.75"/><circle cx="250.68" cy="25.75" r="0.75"/><circle cx="253.16" cy="25.27" r="0.75"/><circle cx="255.25" cy="26.68" r="0.75"/></g>
<g fill="#939395"><rect x="269.6" y="24.6" width="6.2" height="8"/><rect x="268" y="26" width="9.4" height="5.2"/></g><g stroke="#7a7a7c" stroke-width="0.4"><path d="M271.2 24.6 v8 M272.7 24.6 v8 M274.2 24.6 v8 M268 27.4 h9.4 M268 28.8 h9.4 M268 30 h9.4"/></g>
<path d="M291.4 27.8 L295.4 24.6 L298.6 28.8 L294.4 32 Z" fill="#f8f8f8"/><path d="M291.2 27.8 Q289.4 29.4 289.8 31.8" stroke="#1a1a1a" stroke-width="1.1" fill="none"/><path d="M293 25.8 Q294 24 296 24.6" stroke="#333" stroke-width="0.6" fill="none"/>
<rect x="311.6" y="25.8" width="5.4" height="5.4" fill="none" stroke="#1e1e20" stroke-width="1"/><g stroke="#1e1e20" stroke-width="1"><path d="M310.2 24.2 l1.8 1.8 M318.4 24.2 l-1.8 1.8 M310.2 32.8 l1.8 -1.8 M318.4 32.8 l-1.8 -1.8"/></g><g fill="#1e1e20"><rect x="309.8" y="23.8" width="1.5" height="1.5"/><rect x="317.3" y="23.8" width="1.5" height="1.5"/><rect x="309.8" y="31.7" width="1.5" height="1.5"/><rect x="317.3" y="31.7" width="1.5" height="1.5"/></g>
<rect x="326.6" y="21.5" width="0.7" height="14" fill="#8e8e90"/><rect x="326" y="21.5" width="0.6" height="14" fill="#6c6c6e"/>
<rect x="333.8" y="24.6" width="7.6" height="7.6" fill="#878789" stroke="#6c6c6e" stroke-width="0.5" stroke-dasharray="1 0.6"/><path d="M334 32 L341.2 24.8" stroke="#6a6a6c" stroke-width="0.6"/>
<rect x="354.8" y="24.6" width="7.6" height="7.6" fill="#858587"/><path d="M354.8 32.2 L362.4 24.6 V32.2 Z" fill="#727274"/>
<rect x="375" y="24.2" width="8" height="8" fill="#8b8b8d" stroke="#9a9a9c" stroke-width="0.5"/><rect x="376.8" y="26" width="4.4" height="4.4" fill="#98989a" stroke="#77777a" stroke-width="0.4" stroke-dasharray="0.8 0.5"/>
<rect x="393" y="21.5" width="0.7" height="14" fill="#8e8e90"/>
<rect x="393.8" y="21.4" width="19.8" height="14.6" fill="#68686a"/><rect x="413.9" y="21.4" width="20" height="14.6" fill="#68686a"/>
<path d="M399.6 26.6 L406.6 32.2" stroke="#2f7fd6" stroke-width="0.9"/><path d="M399.2 31 q3 2 7.4 1.2" stroke="#2f7fd6" stroke-width="0.8" fill="none"/><path d="M407.2 24 V32.2" stroke="#f0f0f0" stroke-width="1.2"/><path d="M408.2 24.4 V32" stroke="#222" stroke-width="0.5"/>
<path d="M419.6 31.2 L423.4 26.6 H426.6" stroke="#e8e8e8" stroke-width="0.9" fill="none"/><path d="M419.4 31.6 H429.6" stroke="#2f7fd6" stroke-width="0.9"/><path d="M427.6 23.8 V31" stroke="#f0f0f0" stroke-width="1.2"/><path d="M428.6 24.2 V31" stroke="#222" stroke-width="0.5"/><path d="M429.4 31.4 v1.4" stroke="#2f7fd6" stroke-width="0.8"/>
<path d="M444.8 23.4 V30.4" stroke="#f0f0f0" stroke-width="1.3"/><path d="M445.9 23.8 V30.4" stroke="#222" stroke-width="0.5"/><path d="M442.2 25.6 V31.6 M447.8 25.6 V31.6 M441.6 31.8 H448.4" stroke="#2f7fd6" stroke-width="0.8" fill="none" stroke-dasharray="1.4 0.7"/>
<rect x="459.8" y="23.7" width="18.8" height="9" rx="1.3" fill="#f0f0f0"/><circle cx="468.8" cy="27.9" r="2.9" fill="#111"/><path d="M467.4 30 l-0.6 1.8 l2 -1.2 z" fill="#111"/>
<circle cx="50.7" cy="41" r="1" fill="#58585a"/><circle cx="100.3" cy="41" r="1" fill="#4a4a4c"/>
<path d="M629.6 39.8 h5.4 l-2.7 2.9 z" fill="#2c2c2e"/>
<rect x="660.4" y="20.5" width="0.8" height="8.4" fill="#525254"/>
<path d="M644.4 22.6 l-1.7 2.3 l1.7 2.3" fill="none" stroke="#b4b4b6" stroke-width="0.8"/>
<path d="M654.6 22.6 l1.6 2.3 l-1.6 2.3 M657 22.6 l1.6 2.3 l-1.6 2.3" fill="none" stroke="#b4b4b6" stroke-width="0.8"/>
<path d="M664 22.6 l-1.6 2.3 l1.6 2.3 M666.4 22.6 l-1.6 2.3 l1.6 2.3" fill="none" stroke="#b4b4b6" stroke-width="0.8"/>
<rect x="644.2" y="38.9" width="6" height="6" rx="1" fill="#b4b4b6"/><rect x="647.8" y="42.2" width="6.4" height="6.2" rx="1" fill="#f4f4f4" stroke="#6c6c6e" stroke-width="0.5"/><path d="M651.4 44.4 l3.2 0.4 l-0.8 3 z" fill="#111"/>
<rect x="648.2" y="66.4" width="8" height="6.4" fill="none" stroke="#ededed" stroke-width="0.8"/><rect x="645.8" y="64.4" width="8.4" height="6.6" fill="#5b5b5d" stroke="#f4f4f4" stroke-width="0.8"/><rect x="643.2" y="62.2" width="9.2" height="7.4" fill="#fbf4f4" stroke="#cf3a33" stroke-width="1.1"/>
<g><path d="M643.8 88.6 l5.7 -2.4 l5.7 2.4 l-5.7 2.2 z" fill="#f6f6f6"/><path d="M643.8 91.2 l5.7 2.2 l5.7 -2.2 l-1.6 -0.7 l-4.1 1.6 l-4.1 -1.6 z" fill="#e2e2e4"/><path d="M643.8 93.6 l5.7 2.2 l5.7 -2.2 l-1.6 -0.7 l-4.1 1.6 l-4.1 -1.6 z" fill="#f2f2f2"/><path d="M643.8 96 l5.7 2.2 l5.7 -2.2 l-1.6 -0.7 l-4.1 1.6 l-4.1 -1.6 z" fill="#dededf"/></g>
<text x="12.7" y="408.6" font-family="Liberation Serif, serif" font-size="11.5" fill="#38383a" text-anchor="middle">A</text>
<text x="468.85" y="29.7" font-family="Liberation Sans, sans-serif" font-weight="bold" font-size="4.6" fill="#fff" text-anchor="middle">?</text>
</svg>
</body></html>
